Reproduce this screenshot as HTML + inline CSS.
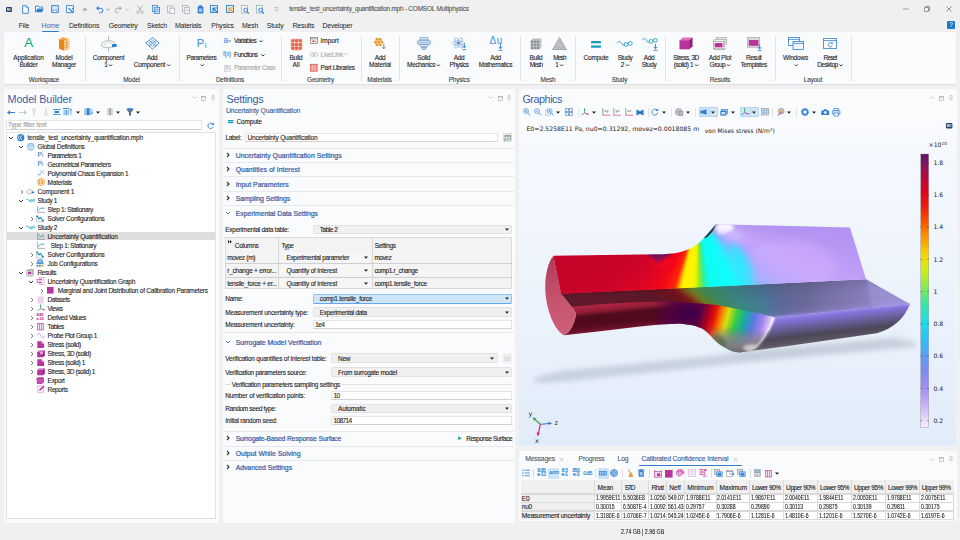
<!DOCTYPE html>
<html lang="en"><head><meta charset="utf-8"><title>COMSOL Multiphysics</title>
<style>

*{box-sizing:border-box;margin:0;padding:0}
html,body{width:960px;height:540px;overflow:hidden;background:#f0f0f0}
body{font-family:"Liberation Sans",sans-serif;font-size:6px;color:#1a1a1a;-webkit-font-smoothing:antialiased}
#app{position:relative;width:960px;height:540px;overflow:hidden;background:#f0f0f0}
.a{position:absolute}
.t{position:absolute;white-space:nowrap;line-height:1.25;-webkit-text-stroke:.1px currentColor}
.panel{position:absolute;background:#fafbfd;border-radius:2px}
.ttl{position:absolute;white-space:nowrap;font-size:10.8px;color:#3b5ea6;line-height:12px;letter-spacing:-.15px}
.sec{position:absolute;white-space:nowrap;font-size:6.9px;color:#345a9c;line-height:9px;-webkit-text-stroke:.22px #3a60a4;color:#3a60a4}
.hl{position:absolute;height:1px;background:#e6e8ee}
.inp{position:absolute;background:#fff;border:1px solid #e6e6e6;border-bottom-color:#d2d2d2;height:9.5px;font-size:6px;line-height:8px;padding-left:2.5px;white-space:nowrap;overflow:hidden}
.sel{position:absolute;background:#f0f0f0;border:1px solid #e2e2e2;border-radius:1.5px;height:9.5px;font-size:6px;line-height:8px;padding-left:7px;white-space:nowrap;overflow:hidden}
svg{position:absolute;overflow:visible}
.rl{position:absolute;white-space:nowrap;font-size:6.5px;letter-spacing:-.1px;line-height:8px;text-align:center;color:#222;transform:translateX(-50%);-webkit-text-stroke:.1px currentColor}
.gl{position:absolute;white-space:nowrap;font-size:6.4px;letter-spacing:-.15px;line-height:8px;text-align:center;color:#3c3c3c;transform:translateX(-50%);top:75.6px;-webkit-text-stroke:.1px currentColor}
.rs{position:absolute;width:1px;top:36px;height:45px;background:#e2e3e6}
.mn{position:absolute;white-space:nowrap;font-size:6.9px;letter-spacing:-.18px;line-height:8px;top:21.5px;color:#222}
.pi{position:absolute;top:94px}

</style></head><body>
<div id="app">
<svg style="left:5.70px;top:6.50px" width="6" height="5" viewBox="0 0 6 5" ><rect x="0" y="0" width="6" height="5" rx="1" fill="#27408b"/><rect x="1" y="1.2" width="2.6" height="2.4" fill="#f2d43a"/><rect x="3.6" y="1.2" width="1.6" height="2.4" fill="#5aa7e8"/></svg><svg style="left:21.50px;top:4.50px" width="7" height="9" viewBox="0 0 7 9" ><path d="M.7.7h3.6l2 2v5.6H.7z" fill="#fff" stroke="#2f7fd0" stroke-width=".9"/><path d="M4.3.7v2h2" fill="none" stroke="#2f7fd0" stroke-width=".7"/></svg><svg style="left:35.20px;top:5.00px" width="9" height="8" viewBox="0 0 9 8" ><path d="M.5 7V1h2.6l.8 1h3.6v1.4" fill="#fff" stroke="#2f7fd0" stroke-width=".9"/><path d="M.6 7.3l1.7-3.9h6.4L7 7.3z" fill="#2f7fd0"/></svg><svg style="left:51.00px;top:4.75px" width="8" height="8.5" viewBox="0 0 8 8.5" ><path d="M.6.6h6.8v7H.6z" fill="#dbe9f7" stroke="#2f7fd0" stroke-width=".9"/><rect x="2" y="5" width="3.8" height="2.6" fill="#fff" stroke="#2f7fd0" stroke-width=".6"/></svg><svg style="left:65.75px;top:4.75px" width="8.5" height="8.5" viewBox="0 0 8.5 8.5" ><path d="M.6.6h6.8v7H.6z" fill="#fff" stroke="#2f7fd0" stroke-width=".9"/><path d="M2.6 3l4.4 4.6M6 3.2l1.3 1.1" stroke="#2f7fd0" stroke-width="1.3"/></svg><svg style="left:83.00px;top:6.50px" width="5" height="5" viewBox="0 0 5 5" ><path d="M.5.2l4 2.3-4 2.3z" fill="#a9adb3"/></svg><svg style="left:95.50px;top:5.50px" width="8" height="7" viewBox="0 0 8 7" ><path d="M1 2.3h3.6a2.2 2.2 0 010 4.4H3.2" fill="none" stroke="#2f7fd0" stroke-width="1"/><path d="M0 2.3L2.6 0v4.6z" fill="#2f7fd0"/></svg><svg style="left:105.50px;top:7.50px" width="4.5" height="3" viewBox="0 0 6 4" ><path d="M1 1l2 2 2-2" fill="none" stroke="#666" stroke-width=".9"/></svg><svg style="left:114.00px;top:5.50px" width="8" height="7" viewBox="0 0 8 7" ><path d="M7 2.3H3.4a2.2 2.2 0 000 4.4h1.4" fill="none" stroke="#a9adb3" stroke-width="1"/><path d="M8 2.3L5.4 0v4.6z" fill="#a9adb3"/></svg><svg style="left:125.30px;top:7.50px" width="4.5" height="3" viewBox="0 0 6 4" ><path d="M1 1l2 2 2-2" fill="none" stroke="#aaa" stroke-width=".9"/></svg><svg style="left:136.30px;top:4.50px" width="8" height="9" viewBox="0 0 8 9" ><path d="M1.5.5l4.3 6M6.5.5l-4.3 6" stroke="#a9adb3" stroke-width=".9"/><circle cx="1.8" cy="7.3" r="1.2" fill="none" stroke="#a9adb3" stroke-width=".8"/><circle cx="6.2" cy="7.3" r="1.2" fill="none" stroke="#a9adb3" stroke-width=".8"/></svg><svg style="left:152.00px;top:4.50px" width="8" height="9" viewBox="0 0 8 9" ><rect x=".5" y=".5" width="5" height="6" fill="#fff" stroke="#2f7fd0" stroke-width=".8"/><rect x="2.3" y="2.3" width="5.2" height="6.2" fill="#e3eefa" stroke="#2f7fd0" stroke-width=".8"/><rect x="3.8" y="4" width="2.2" height="2.8" fill="none" stroke="#2f7fd0" stroke-width=".6"/></svg><svg style="left:166.70px;top:4.50px" width="8" height="9" viewBox="0 0 8 9" ><rect x=".5" y="1" width="5" height="6.5" fill="#f4f4f4" stroke="#a9adb3" stroke-width=".8"/><rect x="3" y="3.2" width="4.5" height="5.3" fill="#fff" stroke="#a9adb3" stroke-width=".8"/></svg><svg style="left:181.50px;top:4.50px" width="8" height="9" viewBox="0 0 8 9" ><rect x=".5" y=".5" width="5" height="6" fill="#fff" stroke="#a9adb3" stroke-width=".8"/><rect x="2.3" y="2.3" width="5.2" height="6.2" fill="#f6f6f6" stroke="#a9adb3" stroke-width=".8"/><path d="M3.5 5.4h2.6M5 4.2l1.2 1.2L5 6.6" fill="none" stroke="#a9adb3" stroke-width=".6"/></svg><svg style="left:196.50px;top:4.50px" width="7" height="9" viewBox="0 0 7 9" ><rect x=".6" y="1.6" width="5.8" height="7" rx="1" fill="#2f7fd0"/><rect x="2" y=".3" width="3" height="1.8" fill="#2f7fd0"/><rect x="1.8" y="3.4" width="3.4" height="3.6" fill="#9cc6ee"/></svg><svg style="left:210.45px;top:4.75px" width="8.5" height="8.5" viewBox="0 0 8.5 8.5" ><rect x=".5" y=".5" width="7" height="7" fill="#e3eefa" stroke="#2f7fd0" stroke-width=".9"/><path d="M3 3l4.8 5M3 3v4M3 3h4" stroke="#2f7fd0" stroke-width="1.1" fill="none"/></svg><svg style="left:225.75px;top:4.75px" width="8.5" height="8.5" viewBox="0 0 8.5 8.5" ><rect x=".5" y=".5" width="7" height="7" fill="#e3eefa" stroke="#2f7fd0" stroke-width=".9"/><path d="M3 3l4.8 5M3 3v4M3 3h4" stroke="#e8a12a" stroke-width="1.1" fill="none"/></svg><svg style="left:240.75px;top:4.50px" width="8.5" height="9" viewBox="0 0 8.5 9" ><rect x=".5" y=".5" width="6" height="7.5" fill="#fff" stroke="#8aa" stroke-width=".7"/><circle cx="4.6" cy="5" r="2" fill="#dbe9f7" stroke="#2f7fd0" stroke-width=".9"/><path d="M6 6.6l2 2" stroke="#2f7fd0" stroke-width="1.1"/></svg><svg style="left:255.75px;top:4.50px" width="8.5" height="9" viewBox="0 0 8.5 9" ><rect x=".5" y=".5" width="6" height="7.5" fill="#fff" stroke="#8aa" stroke-width=".7"/><circle cx="4.6" cy="5" r="2" fill="#dbe9f7" stroke="#2f7fd0" stroke-width=".9"/><path d="M6 6.6l2 2" stroke="#2f7fd0" stroke-width="1.1"/></svg><svg style="left:273.50px;top:6.80px" width="5" height="5" viewBox="0 0 5 5" ><path d="M.8.8h3.4M1 2.6l1.5 1.5L4 2.6" fill="none" stroke="#888" stroke-width=".7"/></svg>
<div class="t" style="left:289.3px;top:4.99px;font-size:6.5px;letter-spacing:-0.247px;color:#555">tensile_test_uncertainty_quantification.mph - COMSOL Multiphysics</div>
<svg style="left:902.50px;top:8.00px" width="6" height="2" viewBox="0 0 6 2" ><path d="M0 1h6" stroke="#666" stroke-width=".6"/></svg>
<svg style="left:924.00px;top:6.00px" width="6" height="6" viewBox="0 0 6 6" ><rect x=".4" y="1.4" width="4.2" height="4.2" rx=".6" fill="none" stroke="#555" stroke-width=".6"/><path d="M1.6 1.4V.9a.5.5 0 01.5-.5H5a.6.6 0 01.6.6v2.9a.5.5 0 01-.5.5h-.5" fill="none" stroke="#555" stroke-width=".6"/></svg>
<svg style="left:946.00px;top:6.00px" width="6" height="6" viewBox="0 0 6 6" ><path d="M.4.4l5.2 5.2M5.6.4L.4 5.6" stroke="#555" stroke-width=".6"/></svg>
<div class="a" style="left:947px;top:20.8px;width:8px;height:8.2px;background:#1f78c8;border-radius:1px;color:#fff;font-size:6.5px;line-height:8.2px;text-align:center">?</div>
<div class="mn" style="left:18.8px;color:#222">File</div><div class="mn" style="left:41.6px;color:#2f6fc0">Home</div><div class="mn" style="left:69px;color:#222">Definitions</div><div class="mn" style="left:108.8px;color:#222">Geometry</div><div class="mn" style="left:147px;color:#222">Sketch</div><div class="mn" style="left:175px;color:#222">Materials</div><div class="mn" style="left:211.3px;color:#222">Physics</div><div class="mn" style="left:242px;color:#222">Mesh</div><div class="mn" style="left:266.8px;color:#222">Study</div><div class="mn" style="left:292.5px;color:#222">Results</div><div class="mn" style="left:322.5px;color:#222">Developer</div><div class="a" style="left:41.8px;top:30.6px;width:17.6px;height:1.2px;background:#2f7fd0;border-radius:1px"></div>
<div class="a" style="left:4.4px;top:32.3px;width:952px;height:51.4px;background:#fafbfd;border-radius:2.5px;box-shadow:0 .5px 1px rgba(0,0,0,.08)"></div>
<div class="rs" style="left:84.7px"></div>
<div class="rs" style="left:179px"></div>
<div class="rs" style="left:281.3px"></div>
<div class="rs" style="left:360.5px"></div>
<div class="rs" style="left:398.8px"></div>
<div class="rs" style="left:520px"></div>
<div class="rs" style="left:575px"></div>
<div class="rs" style="left:665px"></div>
<div class="rs" style="left:775px"></div>
<div class="rs" style="left:851.3px"></div>
<div class="t" style="left:24.2px;top:35.1px;font-size:13.4px;line-height:16px;color:#15a67c">A</div><svg style="left:58.00px;top:36.50px" width="12" height="14" viewBox="0 0 12 14" ><path d="M1 2.2L5.2.3 11.2 2v10.2L6.2 13.7 1 11.6z" fill="#f5a544"/><path d="M1 2.2l5.2 1.6v9.9L1 11.6z" fill="#e8861e"/><path d="M6.2 3.8L11.2 2v10.2l-5 1.5z" fill="#fbe2bd"/><path d="M6.2 6.2l5-1.6M6.2 8.6l5-1.6M6.2 11l5-1.6M8.7 3v10" stroke="#e8861e" stroke-width=".7" fill="none"/></svg><svg style="left:100.50px;top:35.50px" width="16" height="16" viewBox="0 0 16 16" ><path d="M7.5 0v16" stroke="#9aa0a8" stroke-width=".7"/><ellipse cx="7.5" cy="9.2" rx="7" ry="2.6" fill="#f4f5f7" stroke="#9aa0a8" stroke-width=".7"/><path d="M.5 9.2a7 4.6 0 0114 0" fill="#fafafa" stroke="#9aa0a8" stroke-width=".7"/><path d="M3.2 9.6a4.3 3 0 018.6 0" fill="none" stroke="#b5bac0" stroke-width=".6"/><rect x="11" y="8" width="4.6" height="3" rx=".6" fill="#2f7fd0"/></svg><svg style="left:144.50px;top:37.00px" width="15" height="13" viewBox="0 0 15 13" ><path d="M7.5.6l6.6 5.4-6.6 6.2L.9 6z" fill="#fff" stroke="#2f7fd0" stroke-width=".9"/><path d="M7.5 3.2l3.6 3-3.6 3.2-3.6-3.2z M4 3.4l7.2 5.6M11 3.4L3.9 9" fill="none" stroke="#2f7fd0" stroke-width=".7"/></svg><div class="t" style="left:196.8px;top:35.6px;font-size:11.2px;line-height:14px;color:#3f92da">P<span style="font-size:7.5px;position:relative;top:1px;left:.4px">i</span></div><svg style="left:290.50px;top:38.50px" width="11" height="11" viewBox="0 0 11 11" ><rect x="0.3" y="0.3" width="3.3" height="3.3" rx=".8" fill="#e4694e"/><rect x="0.3" y="3.9" width="3.3" height="3.3" rx=".8" fill="#e4694e"/><rect x="0.3" y="7.5" width="3.3" height="3.3" rx=".8" fill="#e4694e"/><rect x="3.9" y="0.3" width="3.3" height="3.3" rx=".8" fill="#e4694e"/><rect x="3.9" y="3.9" width="3.3" height="3.3" rx=".8" fill="#e4694e"/><rect x="3.9" y="7.5" width="3.3" height="3.3" rx=".8" fill="#e4694e"/><rect x="7.5" y="0.3" width="3.3" height="3.3" rx=".8" fill="#e4694e"/><rect x="7.5" y="3.9" width="3.3" height="3.3" rx=".8" fill="#e4694e"/><rect x="7.5" y="7.5" width="3.3" height="3.3" rx=".8" fill="#e4694e"/><rect x=".2" y=".2" width="10.7" height="10.7" rx="2" fill="none" stroke="#e4694e" stroke-width=".5"/></svg><svg style="left:373.50px;top:36.50px" width="13" height="13" viewBox="0 0 13 13" ><circle cx="3" cy="2.2" r="1.55" fill="#f09a2c"/><circle cx="6.2" cy="2.2" r="1.55" fill="#f09a2c"/><circle cx="1.5" cy="5" r="1.55" fill="#f09a2c"/><circle cx="4.7" cy="5" r="1.55" fill="#f09a2c"/><circle cx="7.9" cy="5" r="1.55" fill="#f09a2c"/><circle cx="3" cy="7.8" r="1.55" fill="#f09a2c"/><circle cx="6.2" cy="7.8" r="1.55" fill="#f09a2c"/><path d="M9.8 6.5v5M8.2 9.8l1.6 2 1.6-2" stroke="#777" stroke-width=".8" fill="none"/></svg><svg style="left:416.70px;top:36.50px" width="14" height="13" viewBox="0 0 14 13" ><rect x="3" y=".6" width="8" height="2.2" rx=".5" fill="#eaf1f8" stroke="#5b8fc4" stroke-width=".7"/><rect x=".6" y="3.4" width="12.8" height="3.8" rx=".8" fill="#dbe7f3" stroke="#5b8fc4" stroke-width=".7"/><path d="M2.5 7.6h9l-1.6 2.2H4.1z" fill="#eaf1f8" stroke="#5b8fc4" stroke-width=".7"/><path d="M4.4 10.2h5.2l-1.2 2.2H5.6z" fill="#c9d9ea" stroke="#5b8fc4" stroke-width=".7"/><path d="M1.6 5.3h10.8" stroke="#5b8fc4" stroke-width=".5"/></svg><svg style="left:451.50px;top:35.50px" width="15" height="15" viewBox="0 0 15 15" ><ellipse cx="6.5" cy="7" rx="6" ry="2.3" fill="none" stroke="#7aa7d6" stroke-width=".6" transform="rotate(-55 6.5 7)"/><ellipse cx="6.5" cy="7" rx="6" ry="2.3" fill="none" stroke="#7aa7d6" stroke-width=".6" transform="rotate(55 6.5 7)"/><ellipse cx="6.5" cy="7" rx="6" ry="2.3" fill="none" stroke="#7aa7d6" stroke-width=".6"/><circle cx="6.5" cy="7" r="1.4" fill="#2f7fd0"/><path d="M12.3 7v5M10.7 10l1.6 2 1.6-2M10.5 13.6h3.6" stroke="#2f7fd0" stroke-width=".9" fill="none"/></svg><div class="t" style="left:489.4px;top:34px;font-size:10px;letter-spacing:.8px;line-height:13px;color:#4a98dc">&#916;u</div><svg style="left:497.50px;top:44.00px" width="5" height="7" viewBox="0 0 5 7" ><path d="M2.5 0v4.6M.8 2.8l1.7 2 1.7-2M.5 6.3h4" stroke="#2f7fd0" stroke-width=".9" fill="none"/></svg><svg style="left:530.00px;top:37.50px" width="12" height="12" viewBox="0 0 12 12" ><path d="M.8 2.8L3 .6h8.4v8.2L9.2 11.2H.8z" fill="#b9bcc2"/><rect x=".8" y="2.8" width="8.4" height="8.4" fill="#8d9097"/><path d="M.8 5.6h8.4M.8 8.4h8.4M3.6 2.8v8.4M6.4 2.8v8.4M9.2 2.8L11.4.6M9.2 5.6l2.2-2.2M9.2 8.4l2.2-2.2" stroke="#e4e5e8" stroke-width=".5"/></svg><svg style="left:552.00px;top:37.00px" width="15" height="13" viewBox="0 0 15 13" ><path d="M7.5.5l7 12H.5z" fill="#c8cacf" stroke="#8d9097" stroke-width=".7"/><path d="M7.5 3.5l-1.7 3h3.4zM4 9.6l1.8-3.1M11 9.6L9.2 6.5M4 9.6h7M2.2 12.4L4 9.6l1.8 2.8M11 9.6l-1.8 2.8L7.5 9.6 5.8 12.4M11 9.6l1.8 2.8" fill="none" stroke="#8d9097" stroke-width=".4"/></svg><svg style="left:591.00px;top:40.50px" width="10" height="7" viewBox="0 0 10 7" ><rect x="0" y="0" width="10" height="2.3" rx=".4" fill="#1a9cc0"/><rect x="0" y="4.4" width="10" height="2.3" rx=".4" fill="#1a9cc0"/></svg><svg style="left:617.00px;top:39.50px" width="16" height="8" viewBox="0 0 16 8" ><path d="M.5 3.2c1.2-2.4 2.6-2.4 3.8 0s2.2 2.2 3 .9" fill="none" stroke="#1a9cc0" stroke-width=".9"/><circle cx="9" cy="4.4" r="1.9" fill="none" stroke="#1a9cc0" stroke-width=".9"/><circle cx="13.3" cy="3.4" r="1.9" fill="none" stroke="#1a9cc0" stroke-width=".9"/></svg><svg style="left:641.50px;top:36.50px" width="16" height="8" viewBox="0 0 16 8" ><path d="M.5 3.2c1.2-2.4 2.6-2.4 3.8 0s2.2 2.2 3 .9" fill="none" stroke="#1a9cc0" stroke-width=".9"/><circle cx="9" cy="4.4" r="1.9" fill="none" stroke="#1a9cc0" stroke-width=".9"/><circle cx="13.3" cy="3.4" r="1.9" fill="none" stroke="#1a9cc0" stroke-width=".9"/></svg><svg style="left:652.50px;top:44.00px" width="5" height="7" viewBox="0 0 5 7" ><path d="M2.5 0v4.6M.8 2.8l1.7 2 1.7-2M.5 6.3h4" stroke="#2f7fd0" stroke-width=".9" fill="none"/></svg><svg style="left:679.00px;top:37.00px" width="14" height="13" viewBox="0 0 14 13" ><path d="M.6 3.4L3.6.6h9.8v8.6l-3 3H.6z" fill="#d873c0"/><rect x=".6" y="3.4" width="9.8" height="8.8" fill="#b9359c"/><path d="M10.4 3.4l3-2.8v8.6l-3 3z" fill="#8e1f76"/></svg><svg style="left:713.00px;top:36.50px" width="15" height="14" viewBox="0 0 15 14" ><rect x="3.4" y=".6" width="10" height="7" fill="#e9e9ec" stroke="#999" stroke-width=".6"/><rect x="1.8" y="2.4" width="10" height="7" fill="#f3f3f5" stroke="#999" stroke-width=".6"/><rect x=".4" y="4.4" width="10.4" height="7.4" fill="#fff" stroke="#888" stroke-width=".6"/><rect x="1.6" y="6" width="8" height="4.4" fill="#b9359c"/><path d="M.4 12.6h11.4l1.4-2" stroke="#888" stroke-width=".6" fill="none"/></svg><svg style="left:746.50px;top:36.50px" width="15" height="14" viewBox="0 0 15 14" ><rect x=".4" y=".6" width="12.4" height="9.6" fill="#d9d9de" stroke="#9a9aa0" stroke-width=".6"/><rect x="1.8" y="3" width="9.6" height="5.8" fill="#b9359c"/><path d="M12.6 7.5v4.6M11 10.2l1.6 2 1.6-2M10.8 13.6h3.6" stroke="#2f7fd0" stroke-width=".9" fill="none"/></svg><svg style="left:787.50px;top:37.00px" width="16" height="13" viewBox="0 0 16 13" ><rect x=".5" y=".5" width="11" height="8" fill="#fff" stroke="#2f7fd0" stroke-width=".8"/><path d="M.5 2.4h11" stroke="#2f7fd0" stroke-width=".8"/><rect x="5" y="4.4" width="10.4" height="8" fill="#f2f7fc" stroke="#2f7fd0" stroke-width=".8"/><path d="M5 6.4h10.4" stroke="#2f7fd0" stroke-width=".8"/></svg><svg style="left:823.00px;top:38.00px" width="14" height="11" viewBox="0 0 14 11" ><rect x=".5" y=".5" width="13" height="10" fill="#fff" stroke="#2f7fd0" stroke-width=".8"/><path d="M.5 2.6h13" stroke="#2f7fd0" stroke-width=".8"/><path d="M9 5.2a2.2 2.2 0 10.4 2.6" fill="none" stroke="#2f7fd0" stroke-width=".8"/><path d="M9.8 3.8v2h-2z" fill="#2f7fd0"/></svg>
<div class="t" style="left:223.6px;top:36.3px;font-size:8.2px;line-height:10px;color:#3f92da">a<span style="font-size:4.4px;position:relative;top:-1.4px;left:.2px;font-weight:bold">=</span></div><div class="t" style="left:234px;top:37.19px;font-size:6.5px;letter-spacing:-0.469px;">Variables</div><div class="t" style="left:223px;top:50.4px;font-size:6.3px;letter-spacing:-.35px;color:#3f92da">f(x)</div><div class="t" style="left:234px;top:50.69px;font-size:6.5px;letter-spacing:-0.509px;">Functions</div><svg style="left:224.00px;top:64.50px" width="7" height="7" viewBox="0 0 7 7" ><rect x=".4" y=".4" width="6.2" height="6.2" fill="#f4f4f4" stroke="#c2c2c2" stroke-width=".6"/></svg><div class="t" style="left:225.4px;top:64.6px;font-size:5px;line-height:7px;color:#b8b8b8">P<span style="font-size:3.6px">i</span></div><div class="t" style="left:234px;top:64.19px;font-size:6.5px;letter-spacing:-0.423px;color:#a8a8a8">Parameter Case</div><svg style="left:309.70px;top:37.00px" width="8" height="7" viewBox="0 0 8 7" ><rect x=".4" y=".4" width="7.2" height="6.2" fill="#fff" stroke="#777" stroke-width=".7"/><path d="M.4 1.8h7.2" stroke="#777" stroke-width=".7"/><path d="M6.4 4.2H2.6M4 2.8L2.4 4.2 4 5.6" stroke="#e0553b" stroke-width=".9" fill="none"/></svg><div class="t" style="left:320.6px;top:37.19px;font-size:6.5px;letter-spacing:-0.054px;">Import</div><svg style="left:309.70px;top:51.50px" width="8" height="5" viewBox="0 0 8 5" ><rect x=".4" y=".8" width="4" height="3.4" rx="1.4" fill="none" stroke="#b5b5b5" stroke-width=".8"/><rect x="3.6" y=".8" width="4" height="3.4" rx="1.4" fill="none" stroke="#b5b5b5" stroke-width=".8"/></svg><div class="t" style="left:320.6px;top:50.69px;font-size:6.5px;letter-spacing:-0.181px;color:#a8a8a8">LiveLink</div><svg style="left:310.00px;top:64.10px" width="7.4" height="7.4" viewBox="0 0 7.4 7.4" ><rect x="0" y="0" width="7.4" height="7.4" fill="#e88a80"/><path d="M0 2.5h7.4M0 4.9h7.4M2.5 0v7.4M4.9 0v7.4" stroke="#f7c8c2" stroke-width=".6"/><rect x=".2" y=".2" width="7" height="7" fill="none" stroke="#d9574a" stroke-width=".5"/></svg><div class="t" style="left:320.6px;top:64.19px;font-size:6.5px;letter-spacing:-0.333px;">Part Libraries</div>
<div class="rl" style="left:28.5px;top:53.6px"><span style="letter-spacing:-0.118px">Application</span></div><div class="rl" style="left:28.5px;top:60.99999999999999px"><span style="letter-spacing:-0.319px">Builder</span></div>
<div class="rl" style="left:64px;top:53.6px"><span style="letter-spacing:-0.141px">Model</span></div><div class="rl" style="left:64px;top:60.99999999999999px"><span style="letter-spacing:-0.265px">Manager</span></div>
<div class="rl" style="left:108.5px;top:53.6px"><span style="letter-spacing:-0.245px">Component</span></div><div class="rl" style="left:108.5px;top:60.99999999999999px"><span style="letter-spacing:-0.1px">1</span><svg style="position:relative;display:inline-block;vertical-align:.2px;margin-left:1.4px" width="3.8" height="2.8" viewBox="0 0 3.8 2.8"><path d="M.4.5l1.500 1.500L3.400.5" fill="none" stroke="#2a2a2a" stroke-width="1"/></svg></div>
<div class="rl" style="left:152px;top:53.6px"><span style="letter-spacing:-0.289px">Add</span></div><div class="rl" style="left:152px;top:60.99999999999999px"><span style="letter-spacing:-0.245px">Component</span><svg style="position:relative;display:inline-block;vertical-align:.2px;margin-left:1.4px" width="3.8" height="2.8" viewBox="0 0 3.8 2.8"><path d="M.4.5l1.500 1.500L3.400.5" fill="none" stroke="#2a2a2a" stroke-width="1"/></svg></div>
<div class="rl" style="left:201.5px;top:53.6px"><span style="letter-spacing:-0.36px">Parameters</span></div><div class="rl" style="left:201.5px;top:60.99999999999999px"><svg style="position:relative;display:inline-block;vertical-align:.2px;margin-left:1.4px" width="3.8" height="2.8" viewBox="0 0 3.8 2.8"><path d="M.4.5l1.500 1.500L3.400.5" fill="none" stroke="#2a2a2a" stroke-width="1"/></svg></div>
<div class="rl" style="left:296px;top:53.6px"><span style="letter-spacing:-0.331px">Build</span></div><div class="rl" style="left:296px;top:60.99999999999999px"><span style="letter-spacing:-0.075px">All</span></div>
<div class="rl" style="left:380px;top:53.6px"><span style="letter-spacing:-0.289px">Add</span></div><div class="rl" style="left:380px;top:60.99999999999999px"><span style="letter-spacing:-0.165px">Material</span></div>
<div class="rl" style="left:423.7px;top:53.6px"><span style="letter-spacing:-0.291px">Solid</span></div><div class="rl" style="left:423.7px;top:60.99999999999999px"><span style="letter-spacing:-0.341px">Mechanics</span><svg style="position:relative;display:inline-block;vertical-align:.2px;margin-left:1.4px" width="3.8" height="2.8" viewBox="0 0 3.8 2.8"><path d="M.4.5l1.500 1.500L3.400.5" fill="none" stroke="#2a2a2a" stroke-width="1"/></svg></div>
<div class="rl" style="left:459px;top:53.6px"><span style="letter-spacing:-0.289px">Add</span></div><div class="rl" style="left:459px;top:60.99999999999999px"><span style="letter-spacing:-0.514px">Physics</span></div>
<div class="rl" style="left:495.5px;top:53.6px"><span style="letter-spacing:-0.289px">Add</span></div><div class="rl" style="left:495.5px;top:60.99999999999999px"><span style="letter-spacing:-0.313px">Mathematics</span></div>
<div class="rl" style="left:536px;top:53.6px"><span style="letter-spacing:-0.331px">Build</span></div><div class="rl" style="left:536px;top:60.99999999999999px"><span style="letter-spacing:-0.824px">Mesh</span></div>
<div class="rl" style="left:559.5px;top:53.6px"><span style="letter-spacing:-0.824px">Mesh</span></div><div class="rl" style="left:559.5px;top:60.99999999999999px"><span style="letter-spacing:-0.1px">1</span><svg style="position:relative;display:inline-block;vertical-align:.2px;margin-left:1.4px" width="3.8" height="2.8" viewBox="0 0 3.8 2.8"><path d="M.4.5l1.500 1.500L3.400.5" fill="none" stroke="#2a2a2a" stroke-width="1"/></svg></div>
<div class="rl" style="left:596px;top:53.6px"><span style="letter-spacing:-0.196px">Compute</span></div>
<div class="rl" style="left:625px;top:53.6px"><span style="letter-spacing:-0.384px">Study</span></div><div class="rl" style="left:625px;top:60.99999999999999px"><span style="letter-spacing:-0.1px">2</span><svg style="position:relative;display:inline-block;vertical-align:.2px;margin-left:1.4px" width="3.8" height="2.8" viewBox="0 0 3.8 2.8"><path d="M.4.5l1.500 1.500L3.400.5" fill="none" stroke="#2a2a2a" stroke-width="1"/></svg></div>
<div class="rl" style="left:649px;top:53.6px"><span style="letter-spacing:-0.289px">Add</span></div><div class="rl" style="left:649px;top:60.99999999999999px"><span style="letter-spacing:-0.384px">Study</span></div>
<div class="rl" style="left:686px;top:53.6px"><span style="letter-spacing:-0.484px">Stress, 3D</span></div><div class="rl" style="left:686px;top:60.99999999999999px"><span style="letter-spacing:-0.402px">(solid) 1</span><svg style="position:relative;display:inline-block;vertical-align:.2px;margin-left:1.4px" width="3.8" height="2.8" viewBox="0 0 3.8 2.8"><path d="M.4.5l1.500 1.500L3.400.5" fill="none" stroke="#2a2a2a" stroke-width="1"/></svg></div>
<div class="rl" style="left:720px;top:53.6px"><span style="letter-spacing:-0.247px">Add Plot</span></div><div class="rl" style="left:720px;top:60.99999999999999px"><span style="letter-spacing:-0.493px">Group</span><svg style="position:relative;display:inline-block;vertical-align:.2px;margin-left:1.4px" width="3.8" height="2.8" viewBox="0 0 3.8 2.8"><path d="M.4.5l1.500 1.500L3.400.5" fill="none" stroke="#2a2a2a" stroke-width="1"/></svg></div>
<div class="rl" style="left:753.7px;top:53.6px"><span style="letter-spacing:-0.487px">Result</span></div><div class="rl" style="left:753.7px;top:60.99999999999999px"><span style="letter-spacing:-0.347px">Templates</span></div>
<div class="rl" style="left:795.5px;top:53.6px"><span style="letter-spacing:-0.196px">Windows</span></div><div class="rl" style="left:795.5px;top:60.99999999999999px"><svg style="position:relative;display:inline-block;vertical-align:.2px;margin-left:1.4px" width="3.8" height="2.8" viewBox="0 0 3.8 2.8"><path d="M.4.5l1.500 1.500L3.400.5" fill="none" stroke="#2a2a2a" stroke-width="1"/></svg></div>
<div class="rl" style="left:830px;top:53.6px"><span style="letter-spacing:-0.796px">Reset</span></div><div class="rl" style="left:830px;top:60.99999999999999px"><span style="letter-spacing:-0.478px">Desktop</span><svg style="position:relative;display:inline-block;vertical-align:.2px;margin-left:1.4px" width="3.8" height="2.8" viewBox="0 0 3.8 2.8"><path d="M.4.5l1.500 1.500L3.400.5" fill="none" stroke="#2a2a2a" stroke-width="1"/></svg></div>
<svg style="left:258.50px;top:40.20px" width="3.8" height="2.8" viewBox="0 0 3.8 2.8" ><path d="M.4.5l1.5 1.5L3.4.5" fill="none" stroke="#2a2a2a" stroke-width="1"/></svg>
<svg style="left:260.50px;top:53.70px" width="3.8" height="2.8" viewBox="0 0 3.8 2.8" ><path d="M.4.5l1.5 1.5L3.4.5" fill="none" stroke="#2a2a2a" stroke-width="1"/></svg>
<svg style="left:344.20px;top:53.40px" width="3.6" height="2.6" viewBox="0 0 3.6 2.6" ><path d="M.4.5l1.4 1.4L3.2.5" fill="none" stroke="#aaa" stroke-width=".7"/></svg>
<div class="gl" style="left:44px">Workspace</div>
<div class="gl" style="left:131.5px">Model</div>
<div class="gl" style="left:230px">Definitions</div>
<div class="gl" style="left:320.5px">Geometry</div>
<div class="gl" style="left:379.5px">Materials</div>
<div class="gl" style="left:459.2px">Physics</div>
<div class="gl" style="left:548px">Mesh</div>
<div class="gl" style="left:619.5px">Study</div>
<div class="gl" style="left:720px">Results</div>
<div class="gl" style="left:813px">Layout</div>
<div class="panel" style="left:4.3px;top:89.2px;width:214.3px;height:434px"></div>
<div class="ttl" style="left:7.6px;top:-6.67px;font-size:10.8px;letter-spacing:-0.126px;top:93.4px">Model Builder</div>
<svg style="left:191.90px;top:96.30px" width="5" height="3.4" viewBox="0 0 5 3.4" ><path d="M.5.5l2 2 2-2" fill="none" stroke="#b4b4b4" stroke-width=".7"/></svg><svg style="left:201.30px;top:95.50px" width="5" height="5" viewBox="0 0 5 5" ><rect x=".4" y=".4" width="4.2" height="4.2" fill="none" stroke="#a8a8a8" stroke-width=".6"/><path d="M.4 1h4.2" stroke="#a8a8a8" stroke-width=".9"/></svg><svg style="left:210.60px;top:94.70px" width="4" height="6" viewBox="0 0 4 6" ><path d="M1 .4h2v2.6l.6.8H.4l.6-.8zM2 3.8v2" fill="none" stroke="#b4b4b4" stroke-width=".6"/></svg>
<svg style="left:7.00px;top:109.50px" width="8" height="5" viewBox="0 0 8 5" ><path d="M2.6 2.5H8" stroke="#2f7fd0" stroke-width="1"/><path d="M0 2.5L3 .2v4.6z" fill="#2f7fd0"/></svg><svg style="left:18.50px;top:109.50px" width="8" height="5" viewBox="0 0 8 5" ><path d="M0 2.5h5.4" stroke="#c4c4c4" stroke-width=".8"/><path d="M8 2.5L5 .2v4.6z" fill="#c4c4c4"/></svg><svg style="left:32.00px;top:108.00px" width="4" height="8" viewBox="0 0 4 8" ><path d="M2 2.4V8" stroke="#bdbdbd" stroke-width=".7"/><path d="M.4 2.8L2 .3l1.6 2.5" fill="none" stroke="#bdbdbd" stroke-width=".7"/></svg><svg style="left:43.50px;top:108.00px" width="4" height="8" viewBox="0 0 4 8" ><path d="M2 0v5.6" stroke="#bdbdbd" stroke-width=".7"/><path d="M.4 5.2L2 7.7l1.6-2.5" fill="none" stroke="#bdbdbd" stroke-width=".7"/></svg><svg style="left:53.20px;top:109.00px" width="7.6" height="6" viewBox="0 0 7.6 6" ><path d="M0 .6h7.6M0 5.4h7.6" stroke="#2f7fd0" stroke-width=".9"/><rect x="1.6" y="2" width="4.4" height="2" fill="#2f7fd0"/></svg><svg style="left:63.00px;top:108.30px" width="9" height="7.4" viewBox="0 0 9 7.4" ><path d="M0 .5h6.4" stroke="#2f7fd0" stroke-width=".9"/><rect x=".4" y="1.8" width="1.8" height="5.4" fill="#9cc6ee"/><rect x="2.6" y="1.8" width="1.8" height="5.4" fill="#5aa0e0"/><rect x="4.8" y="1.8" width="1.2" height="5.4" fill="#9cc6ee"/><path d="M7.8 7V1.4M6.8 2.6l1-1.6 1 1.6" stroke="#2f7fd0" stroke-width=".7" fill="none"/></svg><svg style="left:75.50px;top:110.50px" width="4" height="3" viewBox="0 0 4 3" ><path d="M0 .4h4L2 2.8z" fill="#222"/></svg><svg style="left:83.50px;top:108.30px" width="9" height="7.4" viewBox="0 0 9 7.4" ><rect x=".2" y=".2" width="2" height="7" fill="#9cc6ee"/><rect x="2.6" y=".2" width="3" height="7" fill="#2f7fd0"/><rect x="6" y=".2" width="1" height="7" fill="#9cc6ee"/><path d="M8 1v4.6M7.2 4.6l.8 1.6.8-1.6" stroke="#2f7fd0" stroke-width=".6" fill="none"/></svg><svg style="left:96.00px;top:110.50px" width="4" height="3" viewBox="0 0 4 3" ><path d="M0 .4h4L2 2.8z" fill="#222"/></svg><svg style="left:106.50px;top:108.30px" width="6" height="7.4" viewBox="0 0 6 7.4" ><rect x=".2" y=".2" width="1.8" height="7" fill="#cfcfcf"/><rect x="2.3" y=".2" width="1.6" height="7" fill="#9a9a9a"/><rect x="4.2" y=".2" width="1.6" height="7" fill="#cfcfcf"/></svg><svg style="left:116.00px;top:110.50px" width="4" height="3" viewBox="0 0 4 3" ><path d="M0 .4h4L2 2.8z" fill="#222"/></svg><svg style="left:126.00px;top:108.00px" width="8" height="8" viewBox="0 0 8 8" ><path d="M.2 1.2h7.6L5 4.4H3z" fill="#5b6f8a"/><rect x="3" y="4" width="2" height="3.6" fill="#5b6f8a"/><rect x="1.2" y=".2" width="5.6" height="1.6" fill="#2f7fd0"/></svg><svg style="left:136.30px;top:110.50px" width="4" height="3" viewBox="0 0 4 3" ><path d="M0 .4h4L2 2.8z" fill="#222"/></svg>
<div class="inp" style="left:6.3px;top:120.4px;width:195.8px;height:9.2px"></div>
<div class="t" style="left:8px;top:120.99px;font-size:6.5px;letter-spacing:-0.123px;color:#9a9a9a">Type filter text</div>
<svg style="left:207.30px;top:121.50px" width="7" height="7" viewBox="0 0 7 7" ><path d="M5.8 2.2A2.7 2.7 0 106.2 4.6" fill="none" stroke="#2f7fd0" stroke-width=".9"/><path d="M6.9.4v2.6H4.3z" fill="#2f7fd0"/></svg>
<div class="a" style="left:6.3px;top:132.2px;width:209.9px;height:387.2px;background:#fff;border:1px solid #e1e1e1"></div>
<svg style="left:8.20px;top:135.60px" width="6" height="4" viewBox="0 0 6 4" ><path d="M1 1l2 2 2-2" fill="none" stroke="#222" stroke-width=".9"/></svg>
<svg style="left:17.30px;top:133.70px" width="7.4" height="7.4" viewBox="0 0 7.4 7.4" ><circle cx="3.7" cy="3.7" r="3.6" fill="#2f7fd0"/><path d="M2.6 1.6a2.6 2.6 0 000 4.2M4.9 1.4L3.3 3.7l1.6 2.3" stroke="#fff" stroke-width=".8" fill="none"/></svg>
<div class="t" style="left:27.5px;top:134.19px;font-size:6.5px;letter-spacing:-0.218px;">tensile_test_uncertainty_quantification.mph</div>
<svg style="left:18.20px;top:144.60px" width="6" height="4" viewBox="0 0 6 4" ><path d="M1 1l2 2 2-2" fill="none" stroke="#222" stroke-width=".9"/></svg>
<svg style="left:26.70px;top:142.60px" width="7.6" height="7.6" viewBox="0 0 7.6 7.6" ><circle cx="3.8" cy="3.8" r="3.5" fill="#b7d8f4" stroke="#5d9fdb" stroke-width=".6"/><path d="M.6 4.8c2 .9 4.4.9 6.4 0" stroke="#e9f3fc" stroke-width=".8" fill="none"/></svg>
<div class="t" style="left:37.6px;top:143.19px;font-size:6.5px;letter-spacing:-0.219px;">Global Definitions</div>
<div class="t" style="left:37.5px;top:151.20000000000002px;font-size:6.8px;color:#2f7fd0">P<span style="font-size:4.6px">i</span></div>
<div class="t" style="left:47.6px;top:152.19px;font-size:6.5px;letter-spacing:-0.435px;">Parameters 1</div>
<div class="t" style="left:37.5px;top:160.20000000000002px;font-size:6.8px;color:#2f7fd0">P<span style="font-size:4.6px">i</span></div>
<div class="t" style="left:47.6px;top:161.19px;font-size:6.5px;letter-spacing:-0.338px;">Geometrical Parameters</div>
<svg style="left:36.50px;top:169.40px" width="8" height="8" viewBox="0 0 8 8" ><path d="M.6 7.2c1.6-.4 2.6-1.6 3.4-3.2S6 1.4 7.4.8" stroke="#8cbfe8" stroke-width=".7" fill="none"/><g fill="#6aa9de"><circle cx="1.6" cy="5.4" r=".6"/><circle cx="3" cy="5.8" r=".5"/><circle cx="4.6" cy="3" r=".6"/><circle cx="5.8" cy="2.8" r=".5"/><circle cx="6.6" cy="4.6" r=".5"/><circle cx="3.4" cy="2" r=".5"/></g></svg>
<div class="t" style="left:47.6px;top:170.19px;font-size:6.5px;letter-spacing:-0.328px;">Polynomial Chaos Expansion 1</div>
<svg style="left:36.50px;top:178.40px" width="8" height="8" viewBox="0 0 8 8" ><circle cx="4" cy="4" r="3.6" fill="#fbe3c2" stroke="#f09a2c" stroke-width=".7"/><g fill="#f09a2c"><circle cx="2.6" cy="3" r=".9"/><circle cx="5.2" cy="3" r=".9"/><circle cx="2.6" cy="5.2" r=".9"/><circle cx="5.2" cy="5.2" r=".9"/></g></svg>
<div class="t" style="left:47.6px;top:179.19px;font-size:6.5px;letter-spacing:-0.23px;">Materials</div>
<svg style="left:19.50px;top:188.60px" width="4" height="6" viewBox="0 0 4 6" ><path d="M1 1l2 2-2 2" fill="none" stroke="#555" stroke-width="0.75"/></svg>
<svg style="left:26.25px;top:187.90px" width="8.5" height="7" viewBox="0 0 8.5 7" ><path d="M3.8 0v7" stroke="#9aa0a8" stroke-width=".5"/><ellipse cx="3.8" cy="4.2" rx="3.5" ry="1.4" fill="#eee" stroke="#9aa0a8" stroke-width=".5"/><path d="M.3 4.2a3.5 2.4 0 017 0" fill="#f6f6f6" stroke="#9aa0a8" stroke-width=".5"/><rect x="5.6" y="3.6" width="2.6" height="1.6" fill="#2f7fd0"/></svg>
<div class="t" style="left:37.6px;top:188.19px;font-size:6.5px;letter-spacing:-0.23px;">Component 1</div>
<svg style="left:18.20px;top:198.60px" width="6" height="4" viewBox="0 0 6 4" ><path d="M1 1l2 2 2-2" fill="none" stroke="#222" stroke-width=".9"/></svg>
<svg style="left:26.00px;top:197.90px" width="9" height="5" viewBox="0 0 9 5" ><path d="M.3 2c.7-1.5 1.5-1.5 2.2 0s1.3 1.3 1.7.5" fill="none" stroke="#1a9cc0" stroke-width=".7"/><circle cx="5.2" cy="2.8" r="1.1" fill="none" stroke="#1a9cc0" stroke-width=".7"/><circle cx="7.7" cy="2.2" r="1.1" fill="none" stroke="#1a9cc0" stroke-width=".7"/></svg>
<div class="t" style="left:37.6px;top:197.19px;font-size:6.5px;letter-spacing:-0.363px;">Study 1</div>
<svg style="left:36.50px;top:205.90px" width="8" height="7" viewBox="0 0 8 7" ><path d="M.6 0v6.4H8" stroke="#777" stroke-width=".6" fill="none"/><path d="M1.4 4.6l2.2-2.4h4" stroke="#1a9cc0" stroke-width=".8" fill="none"/></svg>
<div class="t" style="left:47.6px;top:206.19px;font-size:6.5px;letter-spacing:-0.354px;">Step 1: Stationary</div>
<svg style="left:29.50px;top:215.60px" width="4" height="6" viewBox="0 0 4 6" ><path d="M1 1l2 2-2 2" fill="none" stroke="#555" stroke-width="0.75"/></svg>
<svg style="left:36.30px;top:214.70px" width="8.4" height="7.4" viewBox="0 0 8.4 7.4" ><path d="M.6 0v6.8H8.2" stroke="#999" stroke-width=".5" fill="none"/><path d="M1 1.2l2 2.4 1.6-1 2 3 1.4.4" stroke="#1a9cc0" stroke-width="1.1" fill="none"/><g fill="#0f7fa8"><circle cx="1.2" cy="1.3" r=".8"/><circle cx="3" cy="3.6" r=".8"/><circle cx="6.6" cy="5.6" r=".8"/></g></svg>
<div class="t" style="left:47.6px;top:215.19px;font-size:6.5px;letter-spacing:-0.245px;">Solver Configurations</div>
<svg style="left:18.20px;top:225.60px" width="6" height="4" viewBox="0 0 6 4" ><path d="M1 1l2 2 2-2" fill="none" stroke="#222" stroke-width=".9"/></svg>
<svg style="left:26.00px;top:224.90px" width="9" height="5" viewBox="0 0 9 5" ><path d="M.3 2c.7-1.5 1.5-1.5 2.2 0s1.3 1.3 1.7.5" fill="none" stroke="#1a9cc0" stroke-width=".7"/><circle cx="5.2" cy="2.8" r="1.1" fill="none" stroke="#1a9cc0" stroke-width=".7"/><circle cx="7.7" cy="2.2" r="1.1" fill="none" stroke="#1a9cc0" stroke-width=".7"/></svg>
<div class="t" style="left:37.6px;top:224.19px;font-size:6.5px;letter-spacing:-0.363px;">Study 2</div>
<div class="a" style="left:7.3px;top:231.6px;width:207.9px;height:8.8px;background:#dedede"></div>
<svg style="left:36.50px;top:232.90px" width="8" height="7" viewBox="0 0 8 7" ><path d="M.6 0v6.4H8" stroke="#777" stroke-width=".6" fill="none"/><path d="M1.6 1.2l2.2 3.2 1.6-2.8 1.8 3.4" stroke="#1a9cc0" stroke-width=".7" fill="none"/><path d="M1.4 5l5.8-3.6" stroke="#8a8" stroke-width=".5"/></svg>
<div class="t" style="left:47.6px;top:233.19px;font-size:6.5px;letter-spacing:-0.17px;">Uncertainty Quantification</div>
<svg style="left:36.50px;top:241.90px" width="8" height="7" viewBox="0 0 8 7" ><path d="M.6 0v6.4H8" stroke="#777" stroke-width=".6" fill="none"/><path d="M1.4 4.6l2.2-2.4h4" stroke="#1a9cc0" stroke-width=".8" fill="none"/></svg>
<div class="t" style="left:50.8px;top:242.19px;font-size:6.5px;letter-spacing:-0.354px;">Step 1: Stationary</div>
<svg style="left:29.50px;top:251.60px" width="4" height="6" viewBox="0 0 4 6" ><path d="M1 1l2 2-2 2" fill="none" stroke="#555" stroke-width="0.75"/></svg>
<svg style="left:36.30px;top:250.70px" width="8.4" height="7.4" viewBox="0 0 8.4 7.4" ><path d="M.6 0v6.8H8.2" stroke="#999" stroke-width=".5" fill="none"/><path d="M1 1.2l2 2.4 1.6-1 2 3 1.4.4" stroke="#1a9cc0" stroke-width="1.1" fill="none"/><g fill="#0f7fa8"><circle cx="1.2" cy="1.3" r=".8"/><circle cx="3" cy="3.6" r=".8"/><circle cx="6.6" cy="5.6" r=".8"/></g></svg>
<div class="t" style="left:47.6px;top:251.19px;font-size:6.5px;letter-spacing:-0.245px;">Solver Configurations</div>
<svg style="left:29.50px;top:260.60px" width="4" height="6" viewBox="0 0 4 6" ><path d="M1 1l2 2-2 2" fill="none" stroke="#555" stroke-width="0.75"/></svg>
<svg style="left:36.30px;top:259.40px" width="8.4" height="8" viewBox="0 0 8.4 8" ><path d="M1.800.3h4.600l.8 3.600H.8z" fill="#4a94dc"/><rect x="2.400" y="1" width="3.400" height="2.200" fill="#9cc6ee"/><path d="M.4 4.700h7.200" stroke="#2f7fd0" stroke-width="1"/><path d="M6.800 3.200c1.400.6 1.400 2.600.2 3.400" stroke="#c8c8c8" stroke-width=".6" fill="none"/><rect x=".6" y="6" width="1.700" height="1.700" fill="#2f7fd0"/><rect x="3" y="6" width="1.700" height="1.700" fill="#3aa84a"/><rect x="5.400" y="6" width="1.700" height="1.700" fill="#f09a2c"/></svg>
<div class="t" style="left:47.6px;top:260.19px;font-size:6.5px;letter-spacing:-0.233px;">Job Configurations</div>
<svg style="left:18.20px;top:270.60px" width="6" height="4" viewBox="0 0 6 4" ><path d="M1 1l2 2 2-2" fill="none" stroke="#222" stroke-width=".9"/></svg>
<svg style="left:26.30px;top:268.60px" width="8.4" height="7.6" viewBox="0 0 8.4 7.6" ><rect x="2" y=".3" width="5.4" height="4.6" fill="#ddd" stroke="#888" stroke-width=".5"/><rect x=".8" y="1.4" width="5.6" height="4.6" fill="#f4f4f4" stroke="#888" stroke-width=".5"/><rect x="1.8" y="2.6" width="3.6" height="2.4" fill="#b9359c"/><path d="M.3 7h6.4l1.4-1.6" stroke="#888" stroke-width=".6" fill="none"/></svg>
<div class="t" style="left:37.6px;top:269.19px;font-size:6.5px;letter-spacing:-0.453px;">Results</div>
<svg style="left:28.20px;top:279.60px" width="6" height="4" viewBox="0 0 6 4" ><path d="M1 1l2 2 2-2" fill="none" stroke="#222" stroke-width=".9"/></svg>
<svg style="left:36.30px;top:277.40px" width="8.4" height="8" viewBox="0 0 8.4 8" ><rect x="3.2" y=".4" width="4.8" height="7.2" fill="#fdf4fb" stroke="#dc8acb" stroke-width=".6"/><path d="M.4 2.500h4.200M.4 5.500h4.200M1.600 2.500v3" stroke="#b9359c" stroke-width=".6" fill="none"/><rect x="4.200" y="1.800" width="1.500" height="1.500" fill="#b9359c"/><rect x="4.200" y="4.800" width="1.500" height="1.500" fill="#b9359c"/></svg>
<div class="t" style="left:47.6px;top:278.19px;font-size:6.5px;letter-spacing:-0.212px;">Uncertainty Quantification Graph</div>
<svg style="left:39.50px;top:287.60px" width="4" height="6" viewBox="0 0 4 6" ><path d="M1 1l2 2-2 2" fill="none" stroke="#555" stroke-width="0.75"/></svg>
<svg style="left:47.20px;top:287.10px" width="6.6" height="6.6" viewBox="0 0 6.6 6.6" ><rect width="6.6" height="6.6" fill="#b9359c"/></svg>
<div class="t" style="left:57.8px;top:287.19px;font-size:6.5px;letter-spacing:-0.227px;">Marginal and Joint Distribution of Calibration Parameters</div>
<svg style="left:29.50px;top:296.60px" width="4" height="6" viewBox="0 0 4 6" ><path d="M1 1l2 2-2 2" fill="none" stroke="#555" stroke-width="0.75"/></svg>
<svg style="left:37.00px;top:295.60px" width="7" height="7.6" viewBox="0 0 7 7.6" ><rect x=".4" y=".2" width="6.2" height="7.2" fill="#f3dcee"/><path d="M.4 2h6.2M.4 3.8h6.2M.4 5.6h6.2M2.5.2v7.2M4.6.2v7.2" stroke="#ecc6e3" stroke-width=".5"/></svg>
<div class="t" style="left:47.6px;top:296.19px;font-size:6.5px;letter-spacing:-0.456px;">Datasets</div>
<svg style="left:29.50px;top:305.60px" width="4" height="6" viewBox="0 0 4 6" ><path d="M1 1l2 2-2 2" fill="none" stroke="#555" stroke-width="0.75"/></svg>
<svg style="left:36.50px;top:304.40px" width="8" height="8" viewBox="0 0 8 8" ><path d="M3.6 4.8V.6" stroke="#2f9e44" stroke-width=".7"/><path d="M2.6 1.8l1-1.4 1 1.4z" fill="#2f9e44"/><path d="M3.6 4.8L.6 6.6" stroke="#2f7fd0" stroke-width=".7"/><path d="M3.6 4.8l3.8 1" stroke="#d6336c" stroke-width=".7"/><path d="M6.4 4.8l1.4 1.2-1.8.6z" fill="#d6336c"/></svg>
<div class="t" style="left:47.6px;top:305.19px;font-size:6.5px;letter-spacing:-0.444px;">Views</div>
<svg style="left:29.50px;top:314.60px" width="4" height="6" viewBox="0 0 4 6" ><path d="M1 1l2 2-2 2" fill="none" stroke="#555" stroke-width="0.75"/></svg>
<div class="t" style="left:36.5px;top:313.2px;font-size:4px;line-height:4px;color:#b9359c;font-weight:bold;letter-spacing:-.25px">8.85<br>e-12</div>
<div class="t" style="left:47.6px;top:314.19px;font-size:6.5px;letter-spacing:-0.378px;">Derived Values</div>
<svg style="left:29.50px;top:323.60px" width="4" height="6" viewBox="0 0 4 6" ><path d="M1 1l2 2-2 2" fill="none" stroke="#555" stroke-width="0.75"/></svg>
<svg style="left:37.00px;top:322.70px" width="7" height="7.4" viewBox="0 0 7 7.4" ><rect x=".4" y=".4" width="6.2" height="6.6" fill="#f8e4f3" stroke="#b9359c" stroke-width=".6"/><path d="M2.5.4v6.6M4.6.4v6.6" stroke="#b9359c" stroke-width=".6"/></svg>
<div class="t" style="left:47.6px;top:323.19px;font-size:6.5px;letter-spacing:-0.415px;">Tables</div>
<svg style="left:29.50px;top:332.60px" width="4" height="6" viewBox="0 0 4 6" ><path d="M1 1l2 2-2 2" fill="none" stroke="#555" stroke-width="0.75"/></svg>
<svg style="left:36.50px;top:332.90px" width="8" height="5" viewBox="0 0 8 5" ><path d="M.3 2.6c1-3 2.4-3 3.6 0s2.6 3 3.8 0" stroke="#d873c0" stroke-width=".7" fill="none"/></svg>
<div class="t" style="left:47.6px;top:332.19px;font-size:6.5px;letter-spacing:-0.341px;">Probe Plot Group 1</div>
<svg style="left:29.50px;top:341.60px" width="4" height="6" viewBox="0 0 4 6" ><path d="M1 1l2 2-2 2" fill="none" stroke="#555" stroke-width="0.75"/></svg>
<svg style="left:36.80px;top:340.70px" width="7.4" height="7.4" viewBox="0 0 7.4 7.4" ><path d="M.3.3h4.2l2.6 2.4v4.4H.3z" fill="#b9359c"/><path d="M4.5.3v2.4h2.6" fill="#e9a9dc"/></svg>
<div class="t" style="left:47.6px;top:341.19px;font-size:6.5px;letter-spacing:-0.33px;">Stress (solid)</div>
<svg style="left:29.50px;top:350.60px" width="4" height="6" viewBox="0 0 4 6" ><path d="M1 1l2 2-2 2" fill="none" stroke="#555" stroke-width="0.75"/></svg>
<svg style="left:36.50px;top:349.60px" width="8" height="7.6" viewBox="0 0 8 7.6" ><path d="M.3 2L2 .3h5.6v5L6 7.2H.3z" fill="#d873c0"/><rect x=".3" y="2" width="5.7" height="5.2" fill="#b9359c"/><path d="M6 2L7.6.3v5L6 7.2z" fill="#8e1f76"/><rect x="3.2" y="2" width="2.8" height="2.2" fill="#e9a9dc"/></svg>
<div class="t" style="left:47.6px;top:350.19px;font-size:6.5px;letter-spacing:-0.364px;">Stress, 3D (solid)</div>
<svg style="left:29.50px;top:359.60px" width="4" height="6" viewBox="0 0 4 6" ><path d="M1 1l2 2-2 2" fill="none" stroke="#555" stroke-width="0.75"/></svg>
<svg style="left:36.80px;top:358.70px" width="7.4" height="7.4" viewBox="0 0 7.4 7.4" ><path d="M.3.3h4.2l2.6 2.4v4.4H.3z" fill="#b9359c"/><path d="M4.5.3v2.4h2.6" fill="#e9a9dc"/></svg>
<div class="t" style="left:47.6px;top:359.19px;font-size:6.5px;letter-spacing:-0.365px;">Stress (solid) 1</div>
<svg style="left:29.50px;top:368.60px" width="4" height="6" viewBox="0 0 4 6" ><path d="M1 1l2 2-2 2" fill="none" stroke="#555" stroke-width="0.75"/></svg>
<svg style="left:36.50px;top:367.60px" width="8" height="7.6" viewBox="0 0 8 7.6" ><path d="M.3 2L2 .3h5.6v5L6 7.2H.3z" fill="#d873c0"/><rect x=".3" y="2" width="5.7" height="5.2" fill="#b9359c"/><path d="M6 2L7.6.3v5L6 7.2z" fill="#8e1f76"/></svg>
<div class="t" style="left:47.6px;top:368.19px;font-size:6.5px;letter-spacing:-0.388px;">Stress, 3D (solid) 1</div>
<svg style="left:36.30px;top:376.70px" width="8.4" height="7.4" viewBox="0 0 8.4 7.4" ><path d="M.4 1.400L2.200.3h5.400L8 5.200 5.600 7H1z" fill="#b9359c"/><path d="M1.600 2.400l4.400 3.400M3.400 1.600l3.600 2.800M1.200 4.200l2.600 2" stroke="#eab4df" stroke-width=".55" fill="none"/></svg>
<div class="t" style="left:47.6px;top:377.19px;font-size:6.5px;letter-spacing:-0.298px;">Export</div>
<svg style="left:36.50px;top:385.40px" width="8" height="8" viewBox="0 0 8 8" ><rect x=".4" y=".8" width="6" height="6.8" rx=".6" fill="#fbeef8" stroke="#dc8acb" stroke-width=".6"/><path d="M2 5.8l.5-1.6L6.6.4l1 1L3.6 5.3z" fill="#b9359c"/></svg>
<div class="t" style="left:47.6px;top:386.19px;font-size:6.5px;letter-spacing:-0.394px;">Reports</div>
<div class="panel" style="left:222.7px;top:89.2px;width:292.09999999999997px;height:434px"></div>
<div class="ttl" style="left:226.5px;top:-6.67px;font-size:10.8px;letter-spacing:-0.253px;top:93.4px">Settings</div>
<svg style="left:488.10px;top:96.30px" width="5" height="3.4" viewBox="0 0 5 3.4" ><path d="M.5.5l2 2 2-2" fill="none" stroke="#b4b4b4" stroke-width=".7"/></svg><svg style="left:497.50px;top:95.50px" width="5" height="5" viewBox="0 0 5 5" ><rect x=".4" y=".4" width="4.2" height="4.2" fill="none" stroke="#a8a8a8" stroke-width=".6"/><path d="M.4 1h4.2" stroke="#a8a8a8" stroke-width=".9"/></svg><svg style="left:506.80px;top:94.70px" width="4" height="6" viewBox="0 0 4 6" ><path d="M1 .4h2v2.6l.6.8H.4l.6-.8zM2 3.8v2" fill="none" stroke="#b4b4b4" stroke-width=".6"/></svg>
<div class="t" style="left:226.1px;top:107.00px;font-size:6.8px;letter-spacing:-0.145px;color:#345a9c">Uncertainty Quantification</div>
<svg style="left:227.90px;top:119.80px" width="5.4" height="3.2" viewBox="0 0 5.4 3.2" ><rect x="0" y="0" width="5.4" height="1.3" fill="#1a9cc0"/><rect x="0" y="1.9" width="5.4" height="1.3" fill="#1a9cc0"/><rect x="0" y="1.3" width="5.4" height=".6" fill="#8fd0e4"/></svg>
<div class="t" style="left:236.6px;top:117.99px;font-size:6.5px;letter-spacing:-0.196px;">Compute</div>
<div class="t" style="left:225.4px;top:134.49px;font-size:6.5px;letter-spacing:-0.318px;">Label:</div>
<div class="inp" style="left:244.9px;top:133.10px;width:252.9px;height:9.4px"></div><div class="t" style="left:247.5px;top:134.49px;font-size:6.5px;letter-spacing:-0.17px;">Uncertainty Quantification</div>
<div class="a" style="left:502.8px;top:132.8px;width:9.4px;height:9.6px;background:#ececec;border:1px solid #dcdcdc;border-radius:1px"></div>
<svg style="left:504.10px;top:134.80px" width="7" height="6" viewBox="0 0 7 6" ><rect x="1" y=".3" width="5.6" height="4.6" fill="#fff" stroke="#777" stroke-width=".6"/><path d="M1 1.2h5.6" stroke="#777" stroke-width=".8"/><path d="M2.4 3.2h3" stroke="#1aa77c" stroke-width=".9"/><path d="M.2 4.4l1.4.8-1.4.8z" fill="#1aa77c"/></svg>
<div class="hl" style="left:223.2px;top:147.8px;width:291.09999999999997px"></div>
<div class="hl" style="left:223.2px;top:162.1px;width:291.09999999999997px"></div>
<div class="hl" style="left:223.2px;top:176.4px;width:291.09999999999997px"></div>
<div class="hl" style="left:223.2px;top:190.8px;width:291.09999999999997px"></div>
<div class="hl" style="left:223.2px;top:205.3px;width:291.09999999999997px"></div>
<div class="hl" style="left:223.2px;top:331.8px;width:291.09999999999997px"></div>
<div class="hl" style="left:223.2px;top:431.4px;width:291.09999999999997px"></div>
<div class="hl" style="left:223.2px;top:445.5px;width:291.09999999999997px"></div>
<div class="hl" style="left:223.2px;top:459.8px;width:291.09999999999997px"></div>
<svg style="left:225.80px;top:151.80px" width="4" height="6" viewBox="0 0 4 6" ><path d="M1 1l2 2-2 2" fill="none" stroke="#333" stroke-width="1.1"/></svg>
<div class="sec" style="left:235.7px;top:150.70000000000002px;letter-spacing:0.007px">Uncertainty Quantification Settings</div>
<svg style="left:225.80px;top:166.20px" width="4" height="6" viewBox="0 0 4 6" ><path d="M1 1l2 2-2 2" fill="none" stroke="#333" stroke-width="1.1"/></svg>
<div class="sec" style="left:235.7px;top:165.1px;letter-spacing:0.029px">Quantities of Interest</div>
<svg style="left:225.80px;top:180.70px" width="4" height="6" viewBox="0 0 4 6" ><path d="M1 1l2 2-2 2" fill="none" stroke="#333" stroke-width="1.1"/></svg>
<div class="sec" style="left:235.7px;top:179.6px;letter-spacing:0.017px">Input Parameters</div>
<svg style="left:225.80px;top:195.20px" width="4" height="6" viewBox="0 0 4 6" ><path d="M1 1l2 2-2 2" fill="none" stroke="#333" stroke-width="1.1"/></svg>
<div class="sec" style="left:235.7px;top:194.1px;letter-spacing:-0.066px">Sampling Settings</div>
<svg style="left:224.80px;top:211.10px" width="6" height="4" viewBox="0 0 6 4" ><path d="M1 1l2 2 2-2" fill="none" stroke="#2f6fc0" stroke-width=".9"/></svg>
<div class="sec" style="left:235.7px;top:208.70000000000002px;letter-spacing:-0.047px">Experimental Data Settings</div>
<svg style="left:224.80px;top:340.10px" width="6" height="4" viewBox="0 0 6 4" ><path d="M1 1l2 2 2-2" fill="none" stroke="#2f6fc0" stroke-width=".9"/></svg>
<div class="sec" style="left:235.7px;top:337.7px;letter-spacing:-0.032px">Surrogate Model Verification</div>
<svg style="left:225.80px;top:435.20px" width="4" height="6" viewBox="0 0 4 6" ><path d="M1 1l2 2-2 2" fill="none" stroke="#333" stroke-width="1.1"/></svg>
<div class="sec" style="left:235.7px;top:434.09999999999997px;letter-spacing:-0.167px">Surrogate-Based Response Surface</div>
<svg style="left:225.80px;top:450.00px" width="4" height="6" viewBox="0 0 4 6" ><path d="M1 1l2 2-2 2" fill="none" stroke="#333" stroke-width="1.1"/></svg>
<div class="sec" style="left:235.7px;top:448.9px;letter-spacing:0.023px">Output While Solving</div>
<svg style="left:225.80px;top:464.30px" width="4" height="6" viewBox="0 0 4 6" ><path d="M1 1l2 2-2 2" fill="none" stroke="#333" stroke-width="1.1"/></svg>
<div class="sec" style="left:235.7px;top:463.2px;letter-spacing:-0.067px">Advanced Settings</div>
<div class="t" style="left:225.3px;top:225.99px;font-size:6.5px;letter-spacing:-0.271px;">Experimental data table:</div>
<div class="sel" style="left:312.7px;top:224.50px;width:199.5px;height:9.6px;"></div><div class="t" style="left:319.7px;top:225.99px;font-size:6.5px;letter-spacing:-0.451px;">Table 2</div><svg style="left:504.80px;top:228.00px" width="4" height="3" viewBox="0 0 4 3" ><path d="M0 .4h4L2 2.8z" fill="#222"/></svg>
<div class="a" style="left:225.2px;top:237.4px;width:287px;height:52px;background:#f3f3f3;border:1px solid #dadada"></div>
<div class="a" style="left:278.4px;top:238px;width:1px;height:51px;background:#d8d8d8"></div>
<div class="a" style="left:371.6px;top:238px;width:1px;height:51px;background:#d8d8d8"></div>
<div class="a" style="left:225.7px;top:263.3px;width:286px;height:1px;background:#d0d0d0"></div>
<div class="a" style="left:225.7px;top:276.5px;width:286px;height:1px;background:#d0d0d0"></div>
<svg style="left:227.70px;top:239.70px" width="4" height="3.4" viewBox="0 0 4 3.4" ><path d="M0 0l1.8 1.7L0 3.4zM2 0l1.8 1.7L2 3.4z" fill="#222"/></svg>
<div class="t" style="left:234.8px;top:242.09px;font-size:6.5px;letter-spacing:-0.278px;">Columns</div>
<div class="t" style="left:281.6px;top:242.09px;font-size:6.5px;letter-spacing:-0.648px;">Type</div>
<div class="t" style="left:374.8px;top:242.09px;font-size:6.5px;letter-spacing:-0.323px;">Settings</div>
<div class="t" style="left:227.2px;top:253.89px;font-size:6.5px;letter-spacing:-0.311px;">movez (m)</div>
<div class="a" style="left:280.2px;top:252.0px;width:90.6px;height:10.4px;background:#f6f6f6;border-radius:1.5px"></div>
<div class="t" style="left:286.4px;top:253.89px;font-size:6.5px;letter-spacing:-0.303px;">Experimental parameter</div>
<svg style="left:363.60px;top:255.90px" width="4" height="3" viewBox="0 0 4 3" ><path d="M0 .4h4L2 2.8z" fill="#222"/></svg>
<div class="t" style="left:374.4px;top:253.89px;font-size:6.5px;letter-spacing:-0.469px;">movez</div>
<div class="t" style="left:227.2px;top:266.79px;font-size:6.5px;letter-spacing:-0.221px;">r_change + error...</div>
<div class="a" style="left:280.2px;top:264.90000000000003px;width:90.6px;height:10.4px;background:#f6f6f6;border-radius:1.5px"></div>
<div class="t" style="left:286.4px;top:266.79px;font-size:6.5px;letter-spacing:-0.193px;">Quantity of interest</div>
<svg style="left:363.60px;top:268.80px" width="4" height="3" viewBox="0 0 4 3" ><path d="M0 .4h4L2 2.8z" fill="#222"/></svg>
<div class="t" style="left:374.4px;top:266.79px;font-size:6.5px;letter-spacing:-0.359px;">comp1.r_change</div>
<div class="t" style="left:227.2px;top:279.79px;font-size:6.5px;letter-spacing:-0.257px;">tensile_force + er...</div>
<div class="a" style="left:280.2px;top:277.90000000000003px;width:90.6px;height:10.4px;background:#f6f6f6;border-radius:1.5px"></div>
<div class="t" style="left:286.4px;top:279.79px;font-size:6.5px;letter-spacing:-0.193px;">Quantity of interest</div>
<svg style="left:363.60px;top:281.80px" width="4" height="3" viewBox="0 0 4 3" ><path d="M0 .4h4L2 2.8z" fill="#222"/></svg>
<div class="t" style="left:374.4px;top:279.79px;font-size:6.5px;letter-spacing:-0.304px;">comp1.tensile_force</div>
<div class="t" style="left:225.3px;top:295.29px;font-size:6.5px;letter-spacing:-0.349px;">Name:</div>
<div class="sel" style="left:312.7px;top:293.60px;width:199.5px;height:10px;background:#cfe6f9;border-color:#8cc2f2;border-bottom:1px solid #62a8ea;"></div><div class="t" style="left:319.7px;top:295.29px;font-size:6.5px;letter-spacing:-0.304px;">comp1.tensile_force</div><svg style="left:504.80px;top:297.30px" width="4" height="3" viewBox="0 0 4 3" ><path d="M0 .4h4L2 2.8z" fill="#222"/></svg>
<div class="t" style="left:225.3px;top:308.69px;font-size:6.5px;letter-spacing:-0.219px;">Measurement uncertainty type:</div>
<div class="sel" style="left:312.7px;top:307.20px;width:199.5px;height:9.6px;"></div><div class="t" style="left:319.7px;top:308.69px;font-size:6.5px;letter-spacing:-0.305px;">Experimental data</div><svg style="left:504.80px;top:310.70px" width="4" height="3" viewBox="0 0 4 3" ><path d="M0 .4h4L2 2.8z" fill="#222"/></svg>
<div class="t" style="left:225.3px;top:321.09px;font-size:6.5px;letter-spacing:-0.244px;">Measurement uncertainty:</div>
<div class="inp" style="left:312.7px;top:319.80px;width:199.5px;height:9.4px"></div><div class="t" style="left:315.3px;top:321.19px;font-size:6.5px;letter-spacing:-0.648px;">1e4</div>
<div class="t" style="left:225.3px;top:354.89px;font-size:6.5px;letter-spacing:-0.195px;">Verification quantities of interest table:</div>
<div class="sel" style="left:331px;top:353.40px;width:166.8px;height:9.6px;"></div><div class="t" style="left:338px;top:354.89px;font-size:6.5px;letter-spacing:-0.301px;">New</div><svg style="left:490.40px;top:356.90px" width="4" height="3" viewBox="0 0 4 3" ><path d="M0 .4h4L2 2.8z" fill="#222"/></svg>
<div class="a" style="left:502.2px;top:353.4px;width:9.6px;height:9.6px;background:#f1f1f1;border-radius:1px"></div>
<svg style="left:504.00px;top:355.20px" width="6" height="6" viewBox="0 0 6 6" ><path d="M1 .6v4.8h2M3 2h2.4v3.4H3z" fill="none" stroke="#c6c6c6" stroke-width=".6"/></svg>
<div class="t" style="left:225.3px;top:368.89px;font-size:6.5px;letter-spacing:-0.268px;">Verification parameters source:</div>
<div class="sel" style="left:331px;top:367.40px;width:181.2px;height:9.6px;"></div><div class="t" style="left:338px;top:368.89px;font-size:6.5px;letter-spacing:-0.252px;">From surrogate model</div><svg style="left:504.80px;top:370.90px" width="4" height="3" viewBox="0 0 4 3" ><path d="M0 .4h4L2 2.8z" fill="#222"/></svg>
<div class="a" style="left:225.3px;top:384.3px;width:5px;height:1px;background:#dcdcdc"></div>
<div class="t" style="left:231.8px;top:380.89px;font-size:6.5px;letter-spacing:-0.249px;">Verification parameters sampling settings</div>
<div class="a" style="left:341px;top:384.3px;width:171px;height:1px;background:#e2e2e2"></div>
<div class="t" style="left:225.3px;top:392.39px;font-size:6.5px;letter-spacing:-0.146px;">Number of verification points:</div>
<div class="inp" style="left:331px;top:391.10px;width:181.2px;height:9.4px"></div><div class="t" style="left:333.6px;top:392.49px;font-size:6.5px;letter-spacing:-0.765px;">10</div>
<div class="t" style="left:225.3px;top:405.29px;font-size:6.5px;letter-spacing:-0.339px;">Random seed type:</div>
<div class="sel" style="left:331px;top:403.80px;width:181.2px;height:9.6px;"></div><div class="t" style="left:338px;top:405.29px;font-size:6.5px;letter-spacing:-0.145px;">Automatic</div><svg style="left:504.80px;top:407.30px" width="4" height="3" viewBox="0 0 4 3" ><path d="M0 .4h4L2 2.8z" fill="#222"/></svg>
<div class="t" style="left:225.3px;top:417.09px;font-size:6.5px;letter-spacing:-0.241px;">Initial random seed:</div>
<div class="inp" style="left:331px;top:415.80px;width:181.2px;height:9.4px"></div><div class="t" style="left:333.6px;top:417.19px;font-size:6.5px;letter-spacing:-0.615px;">108714</div>
<svg style="left:458.20px;top:436.00px" width="4" height="4.4" viewBox="0 0 4 4.4" ><path d="M.2.2l3.6 2-3.6 2z" fill="#1aa77c"/></svg>
<div class="t" style="left:466.2px;top:434.89px;font-size:6.5px;letter-spacing:-0.474px;">Response Surface</div>
<div class="panel" style="left:519px;top:89.2px;width:437.5px;height:356.6px;overflow:hidden"></div>
<div class="ttl" style="left:522.4px;top:-6.67px;font-size:10.8px;letter-spacing:-0.452px;top:93.4px">Graphics</div>
<svg style="left:929.80px;top:96.30px" width="5" height="3.4" viewBox="0 0 5 3.4" ><path d="M.5.5l2 2 2-2" fill="none" stroke="#b4b4b4" stroke-width=".7"/></svg><svg style="left:939.20px;top:95.50px" width="5" height="5" viewBox="0 0 5 5" ><rect x=".4" y=".4" width="4.2" height="4.2" fill="none" stroke="#a8a8a8" stroke-width=".6"/><path d="M.4 1h4.2" stroke="#a8a8a8" stroke-width=".9"/></svg><svg style="left:948.50px;top:94.70px" width="4" height="6" viewBox="0 0 4 6" ><path d="M1 .4h2v2.6l.6.8H.4l.6-.8zM2 3.8v2" fill="none" stroke="#b4b4b4" stroke-width=".6"/></svg>
<svg style="left:0;top:0" width="960" height="540" viewBox="0 0 960 540">
<defs>
 <linearGradient id="bg" x1="0" y1="0" x2="0" y2="1"><stop offset="0" stop-color="#fafbfe"/><stop offset=".1" stop-color="#f5f9fe"/><stop offset=".45" stop-color="#eef4fc"/><stop offset="1" stop-color="#e1ecfa"/></linearGradient>
 <filter id="b1" x="-20%" y="-50%" width="140%" height="200%"><feGaussianBlur stdDeviation="2.6"/></filter>
 <filter id="b2" x="-50%" y="-50%" width="200%" height="200%"><feGaussianBlur stdDeviation="1.6"/></filter>
 <filter id="b3" x="-50%" y="-50%" width="200%" height="200%"><feGaussianBlur stdDeviation=".8"/></filter>
 <filter id="b4" x="-50%" y="-50%" width="200%" height="200%"><feGaussianBlur stdDeviation="3.5"/></filter>
 <linearGradient id="face" gradientUnits="userSpaceOnUse" x1="553" y1="287" x2="760" y2="351">
  <stop offset="0" stop-color="#c2062c"/><stop offset=".3" stop-color="#c6042a"/><stop offset=".43" stop-color="#da0426"/>
  <stop offset=".5" stop-color="#f40618"/><stop offset=".545" stop-color="#ff1c0c"/><stop offset=".558" stop-color="#ff7c00"/>
  <stop offset=".572" stop-color="#fff000"/><stop offset=".625" stop-color="#f6fa00"/><stop offset=".66" stop-color="#6ee846"/>
  <stop offset=".692" stop-color="#0cf0dc"/><stop offset=".74" stop-color="#08f4f8"/><stop offset="1" stop-color="#1cf0fc"/>
 </linearGradient>
 <radialGradient id="lav" gradientUnits="userSpaceOnUse" cx="609" cy="354" r="280">
  <stop offset="0" stop-color="#30e8ff" stop-opacity="0"/><stop offset=".51" stop-color="#30e8ff" stop-opacity="0"/>
  <stop offset=".55" stop-color="#5cccff" stop-opacity=".7"/><stop offset=".585" stop-color="#8aa8ff" stop-opacity="1"/>
  <stop offset=".63" stop-color="#b0a0fa"/><stop offset=".71" stop-color="#c8a8fc"/><stop offset=".85" stop-color="#bc9cf8"/><stop offset="1" stop-color="#ac8ef2"/>
 </radialGradient>
 <linearGradient id="lav2" gradientUnits="userSpaceOnUse" x1="780" y1="285" x2="850" y2="225">
  <stop offset="0" stop-color="#caaafc" stop-opacity=".9"/><stop offset=".5" stop-color="#c0a0f8" stop-opacity=".3"/><stop offset="1" stop-color="#a98bf0" stop-opacity=".9"/>
 </linearGradient>
 <linearGradient id="cap" gradientUnits="userSpaceOnUse" x1="552" y1="258" x2="566" y2="334">
  <stop offset="0" stop-color="#b23c58"/><stop offset=".5" stop-color="#c5526c"/><stop offset="1" stop-color="#cf6079"/>
 </linearGradient>
 <linearGradient id="plane" gradientUnits="userSpaceOnUse" x1="561" y1="294" x2="668.35" y2="137.25">
  <stop offset="0" stop-color="#5e1a2c"/><stop offset=".25" stop-color="#5c1628"/><stop offset=".33" stop-color="#6a1220"/>
  <stop offset=".37" stop-color="#7a181a"/><stop offset=".39" stop-color="#7c4a18"/><stop offset=".412" stop-color="#6c7e22"/>
  <stop offset=".452" stop-color="#3e8a56"/><stop offset=".538" stop-color="#3a8886"/><stop offset=".634" stop-color="#4a7898"/>
  <stop offset=".69" stop-color="#5c6a98"/><stop offset=".79" stop-color="#6c6a9a"/><stop offset=".91" stop-color="#847cb6"/><stop offset="1" stop-color="#a092d8"/>
 </linearGradient>
 <linearGradient id="planeS" gradientUnits="userSpaceOnUse" x1="800" y1="282" x2="804" y2="318">
  <stop offset="0" stop-color="#30304a" stop-opacity=".22"/><stop offset=".5" stop-color="#50507a" stop-opacity="0"/><stop offset="1" stop-color="#a898f0" stop-opacity=".4"/>
 </linearGradient>
 <linearGradient id="planeMg" gradientUnits="userSpaceOnUse" x1="690" y1="0" x2="760" y2="0"><stop offset="0" stop-color="#000"/><stop offset="1" stop-color="#fff"/></linearGradient>
 <mask id="planeM" maskUnits="userSpaceOnUse" x="540" y="270" width="380" height="60"><rect x="540" y="270" width="380" height="60" fill="url(#planeMg)"/></mask>
 <linearGradient id="shaft" gradientUnits="userSpaceOnUse" x1="620" y1="303.4" x2="622.6" y2="329.4">
  <stop offset="0" stop-color="#ac2440"/><stop offset=".2" stop-color="#921c36"/><stop offset=".3" stop-color="#6a1226"/><stop offset=".38" stop-color="#500a1c"/>
  <stop offset=".7" stop-color="#520a1c"/><stop offset=".88" stop-color="#64102a"/><stop offset="1" stop-color="#7c162e"/>
 </linearGradient>
 <linearGradient id="shaftX" gradientUnits="userSpaceOnUse" x1="655" y1="0" x2="700" y2="0">
  <stop offset="0" stop-color="#400050" stop-opacity="0"/><stop offset=".6" stop-color="#480048" stop-opacity=".8"/><stop offset="1" stop-color="#50004a" stop-opacity=".95"/>
 </linearGradient>
 <linearGradient id="bowl" gradientUnits="userSpaceOnUse" x1="655" y1="291" x2="776" y2="324">
  <stop offset="0" stop-color="#4c0048" stop-opacity="0"/><stop offset=".2" stop-color="#4c0048" stop-opacity=".85"/><stop offset=".3" stop-color="#4c0048"/><stop offset=".39" stop-color="#5a0044"/><stop offset=".455" stop-color="#a00028"/>
  <stop offset=".51" stop-color="#e81208"/><stop offset=".558" stop-color="#f87800"/><stop offset=".61" stop-color="#d8e010"/>
  <stop offset=".68" stop-color="#38cc48"/><stop offset=".75" stop-color="#18a8a8"/><stop offset=".82" stop-color="#5a78e0"/>
  <stop offset=".895" stop-color="#a488f0"/><stop offset=".945" stop-color="#d8c4f8"/><stop offset=".985" stop-color="#fbf6fb"/>
 </linearGradient>
 <linearGradient id="bowlS" gradientUnits="userSpaceOnUse" x1="735" y1="306" x2="731" y2="352">
  <stop offset="0" stop-color="#555" stop-opacity="0"/><stop offset=".45" stop-color="#777" stop-opacity="0"/>
  <stop offset=".68" stop-color="#8a8288" stop-opacity=".75"/><stop offset=".85" stop-color="#847c80" stop-opacity=".95"/><stop offset="1" stop-color="#6e686c" stop-opacity="1"/>
 </linearGradient>
 <linearGradient id="bowlMg" gradientUnits="userSpaceOnUse" x1="698" y1="0" x2="722" y2="0"><stop offset="0" stop-color="#000"/><stop offset="1" stop-color="#fff"/></linearGradient>
 <mask id="bowlM" maskUnits="userSpaceOnUse" x="640" y="290" width="150" height="70"><rect x="640" y="290" width="150" height="70" fill="url(#bowlMg)"/></mask>
 <linearGradient id="cyl" gradientUnits="userSpaceOnUse" x1="830" y1="312" x2="833.4" y2="342">
  <stop offset="0" stop-color="#9484e6"/><stop offset=".12" stop-color="#8272d8"/><stop offset=".4" stop-color="#665e96"/>
  <stop offset=".68" stop-color="#4c4658"/><stop offset=".88" stop-color="#5a5462"/><stop offset="1" stop-color="#746e7a"/>
 </linearGradient>
 <linearGradient id="rim" gradientUnits="userSpaceOnUse" x1="775" y1="317" x2="750" y2="352">
  <stop offset="0" stop-color="#fff"/><stop offset=".5" stop-color="#f4ecec"/><stop offset="1" stop-color="#c8c0bc"/>
 </linearGradient>
 <linearGradient id="cbar" x1="0" y1="0" x2="0" y2="1">
  <stop offset="0" stop-color="#5c1466"/><stop offset=".03" stop-color="#7a1668"/><stop offset=".08" stop-color="#b00a40"/>
  <stop offset=".13" stop-color="#d80420"/><stop offset=".19" stop-color="#f01808"/><stop offset=".25" stop-color="#fa5800"/>
  <stop offset=".31" stop-color="#fc9c00"/><stop offset=".37" stop-color="#f4d800"/><stop offset=".42" stop-color="#d4ec18"/>
  <stop offset=".465" stop-color="#a0ec3c"/><stop offset=".505" stop-color="#6ee868"/><stop offset=".55" stop-color="#38e4a4"/>
  <stop offset=".62" stop-color="#1cdce8"/><stop offset=".68" stop-color="#30bcf8"/><stop offset=".74" stop-color="#5c9cf4"/><stop offset=".79" stop-color="#7c8cf2"/>
  <stop offset=".85" stop-color="#a08cf0"/><stop offset=".91" stop-color="#c4acf6"/><stop offset=".97" stop-color="#e6dcf8"/><stop offset="1" stop-color="#f4f0fa"/>
 </linearGradient>
 <clipPath id="cv"><rect x="519" y="119.5" width="437.5" height="326.3"/></clipPath>
 <clipPath id="faceC"><path d="M553.3 255.8L640 254.6L662 254.4C676 254.2 687 251 694 246.6C700 242.6 703 239.4 704.4 237.6L716 224.2L850 227.5L866 279.3L561 294Z"/></clipPath>
 <clipPath id="bowlC"><path d="M655 298L717.8 300L736.7 305L755.6 309.5L774.5 317C772 324 770 329 767 332.8C764 338 761 342 758 345.4C755 348.6 752 350.4 748 351.2L739.2 352.4C735 352 731.5 351 727.9 349.2C724 347 721 345.4 717.8 342.9C715 340.6 712.6 338 710.2 335.3C707.6 332.6 705.2 330.6 702.7 329C699.4 327 696 326 692.6 325.3L680 323.6L660 324.4L655 325Z"/></clipPath>
</defs>
<rect x="519" y="119.5" width="437.5" height="326.3" fill="url(#bg)"/>
<g clip-path="url(#cv)">
 <!-- floor shadow -->
 <path d="M533 378L560 371L700 357L745 352L890 338.500L915 341.500L915 347L760 361L700 367.500L560 382L537 383Z" fill="#8e98a8" opacity=".34" filter="url(#b1)"/>
 <path d="M720 352L900 337L906 334L901 342L745 358Z" fill="#8e98a8" opacity=".12" filter="url(#b4)"/>
 <!-- end cap -->
 <path d="M553.3 255.8C548 262 544.8 276 545.3 290C546 309 554 330 564 335.2C570 333 575.4 323 576.1 313.3L571.7 306.7L561 293.6Z" fill="url(#cap)"/>
 <!-- cylinder surface of shaft -->
 <path d="M570.9 305.5L600 303.1L640 300.7L665 300.6L680 301.4L700 302.4L700 328C697 326.4 695 325.8 692.6 325.3L680 323.6L660 324.4L640 326.6L600 331.2L564 335.2C570 333 575.4 323 576.1 313.3Z" fill="url(#shaft)"/>
 <!-- block cylinder surface -->
 <path d="M774.5 317L910 304.2C907 311 903 317.4 898 321.7C892 327 885 331 876.7 333.3L790 345.8L748 351.2C752 350.4 755 348.6 758 345.4C761 342 764 338 767 332.8C770 329 772 324 774.5 317Z" fill="url(#cyl)"/>
 <!-- fillet bowl -->
 <g clip-path="url(#bowlC)">
  <rect x="650" y="296" width="132" height="62" fill="url(#bowl)"/>
  <rect x="650" y="296" width="132" height="62" fill="url(#bowlS)" mask="url(#bowlM)"/>
  <ellipse cx="690" cy="314" rx="11" ry="6" fill="#3a004c" opacity=".7" filter="url(#b2)"/>
  <ellipse cx="752" cy="348" rx="9" ry="3.4" fill="#e4dcd8" opacity=".8" filter="url(#b2)"/>
  <ellipse cx="719" cy="341" rx="8" ry="5" fill="#3c5a4c" opacity=".55" filter="url(#b2)" transform="rotate(40 719 341)"/>
 </g>
 <path d="M774.5 317C772 324 770 329 767 332.8C764 338 761 342 758 345.4C755 348.6 752 350.4 748 351.2" fill="none" stroke="url(#rim)" stroke-width="1.5" filter="url(#b3)"/>
</g>
</svg><div class="a" style="left:556px;top:274px;width:360px;height:48px;clip-path:path('M5.00 19.60L310.00 5.30L354.00 30.20L218.50 43.00L199.60 38.70L180.70 34.90L161.80 31.10L144.00 29.60L124.00 28.60L109.00 27.80L84.00 27.90L44.00 30.30L15.70 32.70Z');background:conic-gradient(from 270deg at 238px 104px,#5e1a2c 0deg,#5e1a2c 19.8deg,#5c1628 29.7deg,#6a1220 34.6deg,#7a181a 36.6deg,#7c4a18 38.4deg,#6c7e22 40.4deg,#3e8a56 44.4deg,#3a8886 54.6deg,#4a7898 69.6deg,#5c6a98 79.4deg,#6c6a9a 99.4deg,#847cb6 126deg,#a092d8 147.5deg,#a092d8 200deg,#5e1a2c 360deg)"></div><svg style="left:0;top:0" width="960" height="540" viewBox="0 0 960 540">
<g clip-path="url(#cv)">
 <path d="M690 287.6L866 279.3L910 304.2L774.5 317L755.6 312.7L736.7 308.9L717.8 305.1L700 303.6L690 303.1Z" fill="url(#planeS)" mask="url(#planeM)"/>
 <path d="M561 294.4L690 288" stroke="#3c0a16" stroke-width="1.6" opacity=".35" filter="url(#b3)"/>
 <path d="M866 279.3L910 304.2L872 307.800Z" fill="#b4a8ee" opacity=".3" filter="url(#b3)"/>
 <path d="M774.5 317L910 304.2" stroke="#9a8af0" stroke-width="1.4" opacity=".7" filter="url(#b3)"/>
</g>
</svg><div class="a" style="left:541px;top:218px;width:332px;height:80px;clip-path:path('M12.30 37.80L99.00 36.60L121.00 36.40C135.00 36.20 146.00 33.00 153.00 28.60C159.00 24.60 162.00 21.40 163.40 19.60L175.00 6.20L309.00 9.50L325.00 61.30L20.00 76.00Z');background:conic-gradient(from 0deg at 157px -3px,#b898f4 0deg,#b494f2 100deg,#c4a4fb 116deg,#b8a4fc 125deg,#9ca8ff 131.5deg,#80b6ff 137deg,#3ce4fe 144deg,#12fafc 152deg,#0cfcf2 170deg,#30f09c 175deg,#8ae830 178.5deg,#e6f600 182deg,#fff400 186deg,#fff000 192.5deg,#ffa000 195deg,#ff2808 198deg,#f20818 206deg,#da0426 220deg,#c8042a 236deg,#c2062c 270deg,#c2062c 360deg)"></div><svg style="left:0;top:0" width="960" height="540" viewBox="0 0 960 540">
<g clip-path="url(#faceC)">
  <ellipse cx="790" cy="266" rx="46" ry="26" fill="#d0b0ff" opacity=".45" filter="url(#b4)"/>
  <path d="M646 253L672 252.6L668 256L657 263.5L653 257.5Z" fill="#56126c" opacity=".95" filter="url(#b3)"/><ellipse cx="662" cy="262" rx="12" ry="6" fill="#ff1020" opacity=".35" filter="url(#b2)"/>
  <ellipse cx="725" cy="227.5" rx="9" ry="4.6" fill="#fff" opacity=".95" filter="url(#b2)"/><ellipse cx="722" cy="231" rx="6" ry="4" fill="#f4ecff" opacity=".7" filter="url(#b2)"/>
  <ellipse cx="741" cy="262" rx="7" ry="20" fill="#20f0fe" opacity=".8" filter="url(#b4)" transform="rotate(-28 741 262)"/><ellipse cx="733" cy="236" rx="10" ry="6" fill="#dcd0ff" opacity=".45" filter="url(#b4)"/>
</g>
<path d="M703.6 238.6L716.4 223.8L712.6 231.6L707.2 237.2Z" fill="#34343e"/>
<rect x="920.8" y="154" width="7.9" height="273.8" fill="url(#cbar)" stroke="#8a8a8a" stroke-width=".4"/><path d="M920.8 162.5h1.4M927.3 162.5h1.4" stroke="#222" stroke-width=".5"/><path d="M920.8 194.8h1.4M927.3 194.8h1.4" stroke="#222" stroke-width=".5"/><path d="M920.8 227.0h1.4M927.3 227.0h1.4" stroke="#222" stroke-width=".5"/><path d="M920.8 259.3h1.4M927.3 259.3h1.4" stroke="#222" stroke-width=".5"/><path d="M920.8 291.6h1.4M927.3 291.6h1.4" stroke="#222" stroke-width=".5"/><path d="M920.8 323.9h1.4M927.3 323.9h1.4" stroke="#222" stroke-width=".5"/><path d="M920.8 356.1h1.4M927.3 356.1h1.4" stroke="#222" stroke-width=".5"/><path d="M920.8 388.4h1.4M927.3 388.4h1.4" stroke="#222" stroke-width=".5"/><path d="M920.8 420.7h1.4M927.3 420.7h1.4" stroke="#222" stroke-width=".5"/><text x="933.4" y="164.8" font-family="DejaVu Sans,sans-serif" font-size="6.1" fill="#222">1.8</text><text x="933.4" y="197.0" font-family="DejaVu Sans,sans-serif" font-size="6.1" fill="#222">1.6</text><text x="933.4" y="229.3" font-family="DejaVu Sans,sans-serif" font-size="6.1" fill="#222">1.4</text><text x="933.4" y="261.6" font-family="DejaVu Sans,sans-serif" font-size="6.1" fill="#222">1.2</text><text x="933.4" y="293.8" font-family="DejaVu Sans,sans-serif" font-size="6.1" fill="#222">1</text><text x="933.4" y="326.1" font-family="DejaVu Sans,sans-serif" font-size="6.1" fill="#222">0.8</text><text x="933.4" y="358.4" font-family="DejaVu Sans,sans-serif" font-size="6.1" fill="#222">0.6</text><text x="933.4" y="390.6" font-family="DejaVu Sans,sans-serif" font-size="6.1" fill="#222">0.4</text><text x="933.4" y="422.9" font-family="DejaVu Sans,sans-serif" font-size="6.1" fill="#222">0.2</text>
<path d="M540.3 424.3L535 419.5" stroke="#3aa84a" stroke-width="1.2"/><path d="M532.6 417.3l3.9 1-2.6 2.8z" fill="#3aa84a"/>
<path d="M540.3 424.3L549 423.5" stroke="#4a7fd0" stroke-width="1.2"/><path d="M552.2 423.2l-3.6 1.9-.3-3.4z" fill="#3b6fc8"/>
<path d="M540.3 424.3L538.5 433" stroke="#e0206a" stroke-width="1.2"/><path d="M537.8 436.4l-1.3-3.9 3.4.6z" fill="#e0206a"/>
<text x="528.6" y="416.4" font-family="DejaVu Sans,sans-serif" font-size="6.6" fill="#222">y</text>
<text x="554.4" y="424.9" font-family="DejaVu Sans,sans-serif" font-size="6.6" fill="#222">z</text>
<text x="535" y="442.6" font-family="DejaVu Sans,sans-serif" font-size="6.6" fill="#222">x</text>
<text x="526.4" y="131.1" font-family="DejaVu Sans,sans-serif" font-size="6.1" textLength="172.8" lengthAdjust="spacingAndGlyphs" fill="#222">E0=2.5258E11 Pa, nu0=0.31292, movez=0.0018085 m</text><text x="704.8" y="132.8" font-family="DejaVu Sans,sans-serif" font-size="6.1" textLength="70" lengthAdjust="spacingAndGlyphs" fill="#222">von Mises stress (N/m<tspan dy="-2.2" font-size="4.2">2</tspan><tspan dy="2.2">)</tspan></text><text x="928.6" y="147.4" font-family="DejaVu Sans,sans-serif" font-size="6.1" fill="#222">×10<tspan dy="-2.6" font-size="4.3">10</tspan></text></svg>
<svg style="left:522.50px;top:108.10px" width="7.4" height="7.8" viewBox="0 0 7.4 7.8" ><circle cx="3" cy="3" r="2.5" fill="#e4effa" stroke="#4a94dc" stroke-width=".65"/><path d="M4.8 4.8L7 7.4" stroke="#4a94dc" stroke-width=".95"/><path d="M1.8 3h2.4M3 1.8v2.4" stroke="#2f7fd0" stroke-width=".6"/></svg><svg style="left:534.10px;top:108.10px" width="7.4" height="7.8" viewBox="0 0 7.4 7.8" ><circle cx="3" cy="3" r="2.5" fill="#e4effa" stroke="#4a94dc" stroke-width=".65"/><path d="M4.8 4.8L7 7.4" stroke="#4a94dc" stroke-width=".95"/><path d="M1.8 3h2.4" stroke="#2f7fd0" stroke-width=".6"/></svg><svg style="left:544.70px;top:107.80px" width="8.6" height="8.4" viewBox="0 0 8.6 8.4" ><rect x=".3" y="2.2" width="5" height="5" fill="none" stroke="#8db6e2" stroke-width=".6"/><g transform="translate(1.6 0)"><circle cx="3" cy="3" r="2.5" fill="#e4effa" stroke="#4a94dc" stroke-width=".65"/><path d="M4.8 4.8L7 7.4" stroke="#4a94dc" stroke-width=".95"/><path d="M1.8 3h2.4M3 1.8v2.4" stroke="#2f7fd0" stroke-width=".6"/></g></svg><svg style="left:556.00px;top:110.50px" width="4" height="3" viewBox="0 0 4 3" ><path d="M0 .4h4L2 2.8z" fill="#222"/></svg><svg style="left:565.40px;top:108.00px" width="8" height="8" viewBox="0 0 8 8" ><rect x=".4" y=".4" width="7.2" height="7.2" fill="#e6eef8" stroke="#8a95a5" stroke-width=".7"/><path d="M4 1.2v5.6M1.2 4h5.6" stroke="#2f7fd0" stroke-width=".8"/><path d="M4 .6l1 1.4H3zM4 7.4l1-1.4H3zM.6 4L2 3v2zM7.4 4L6 3v2z" fill="#2f7fd0"/></svg><div class="a" style="left:577.6px;top:107.5px;width:1px;height:9px;background:#e2e2e2"></div><svg style="left:580.80px;top:108.00px" width="8" height="8" viewBox="0 0 8 8" ><path d="M3.6 5V.6" stroke="#2f9e44" stroke-width=".8"/><path d="M2.6 1.8l1-1.6 1 1.6z" fill="#2f9e44"/><path d="M3.6 5L.6 6.8" stroke="#2f7fd0" stroke-width=".8"/><path d="M3.6 5l3.8 1.2" stroke="#d6336c" stroke-width=".8"/><path d="M6.6 5l1.4 1.4-2 .4z" fill="#d6336c"/></svg><svg style="left:592.00px;top:110.50px" width="4" height="3" viewBox="0 0 4 3" ><path d="M0 .4h4L2 2.8z" fill="#222"/></svg><svg style="left:602.00px;top:108.00px" width="8" height="8" viewBox="0 0 8 8" ><path d="M.8 0v7.2" stroke="#4cae5c" stroke-width=".8" fill="none"/><path d="M.4 7.2H8" stroke="#e0508a" stroke-width=".8"/></svg><div class="t" style="left:604.2px;top:108.8px;font-size:4.3px;line-height:4.6px;color:#8a8a8a;letter-spacing:-.2px">xy</div><svg style="left:613.40px;top:108.00px" width="8" height="8" viewBox="0 0 8 8" ><path d="M.8 0v7.2" stroke="#4cae5c" stroke-width=".8" fill="none"/><path d="M.4 7.2H8" stroke="#e0508a" stroke-width=".8"/></svg><div class="t" style="left:615.6px;top:108.8px;font-size:4.3px;line-height:4.6px;color:#8a8a8a;letter-spacing:-.2px">yz</div><svg style="left:625.00px;top:108.00px" width="8" height="8" viewBox="0 0 8 8" ><path d="M.8 0v7.2" stroke="#4cae5c" stroke-width=".8" fill="none"/><path d="M.4 7.2H8" stroke="#e0508a" stroke-width=".8"/></svg><div class="t" style="left:627.2px;top:108.8px;font-size:4.3px;line-height:4.6px;color:#8a8a8a;letter-spacing:-.2px">xz</div><svg style="left:636.40px;top:108.50px" width="8" height="7" viewBox="0 0 8 7" ><path d="M.4.4l3 1.4v3.4l-3 1.4zM7.6.4l-3 1.4v3.4l3 1.4z" fill="#2f7fd0"/><rect x="2.8" y="2.4" width="2.4" height="2.2" fill="#1b5fa8"/></svg><div class="a" style="left:648px;top:107.5px;width:1px;height:9px;background:#e2e2e2"></div><svg style="left:651.30px;top:108.30px" width="7.4" height="7.4" viewBox="0 0 7.4 7.4" ><path d="M6.2 2.2A3 3 0 106.8 4.8" fill="none" stroke="#2f7fd0" stroke-width=".9"/><path d="M7.2.2v2.8H4.4z" fill="#2f7fd0"/></svg><svg style="left:662.00px;top:110.50px" width="4" height="3" viewBox="0 0 4 3" ><path d="M0 .4h4L2 2.8z" fill="#222"/></svg><div class="a" style="left:671.3px;top:107.5px;width:1px;height:9px;background:#e2e2e2"></div><svg style="left:675.20px;top:108.00px" width="8.4" height="8" viewBox="0 0 8.4 8" ><circle cx="3.8" cy="4" r="3.4" fill="#d5d7db" stroke="#8d9097" stroke-width=".6"/><path d="M3.8.6c-2 2-2 4.8 0 6.8M.6 3h6.4M.6 5h6.4" stroke="#8d9097" stroke-width=".5" fill="none"/><rect x="4.4" y="3.4" width="3.6" height="4.2" fill="#b9bcc2" stroke="#7d8087" stroke-width=".5"/></svg><svg style="left:686.00px;top:110.50px" width="4" height="3" viewBox="0 0 4 3" ><path d="M0 .4h4L2 2.8z" fill="#222"/></svg><div class="a" style="left:695px;top:107.5px;width:1px;height:9px;background:#e2e2e2"></div><div class="a" style="left:698.8px;top:106.8px;width:19px;height:10.4px;background:#d0e6f9;border:1px solid #b4d6f4;border-radius:1px"></div><svg style="left:700.10px;top:109.00px" width="7" height="6" viewBox="0 0 7 6" ><path d="M6.6.2v5.6L2.6 4.4H.4V1.6h2.2z" fill="#2f7fd0"/></svg><div class="a" style="left:708.8px;top:107.8px;width:1px;height:8.4px;background:#b4d6f4"></div><svg style="left:711.40px;top:110.50px" width="4" height="3" viewBox="0 0 4 3" ><path d="M0 .4h4L2 2.8z" fill="#222"/></svg><svg style="left:720.40px;top:108.50px" width="8" height="7" viewBox="0 0 8 7" ><rect x="1.6" y=".3" width="6" height="4.6" fill="#9cc6ee" stroke="#2f7fd0" stroke-width=".6"/><rect x=".3" y="1.8" width="6" height="4.8" fill="#2f7fd0"/><rect x="1.4" y="3" width="3.8" height="2.4" fill="#cfe3f7"/></svg><svg style="left:731.20px;top:110.50px" width="4" height="3" viewBox="0 0 4 3" ><path d="M0 .4h4L2 2.8z" fill="#222"/></svg><div class="a" style="left:739.8px;top:106.8px;width:18.8px;height:10.4px;background:#d0e6f9;border:1px solid #b4d6f4;border-radius:1px"></div><svg style="left:741.40px;top:108.20px" width="8" height="7.6" viewBox="0 0 8 7.6" ><path d="M3.6 4.8V.6" stroke="#2f9e44" stroke-width=".8"/><path d="M3.6 4.8L.6 6.6" stroke="#2f7fd0" stroke-width=".8"/><path d="M3.6 4.8l3.8 1.2" stroke="#d6336c" stroke-width=".8"/><path d="M2.6 1.6l1-1.4 1 1.4z" fill="#2f9e44"/><path d="M6.6 4.8L8 6.2l-2 .4z" fill="#d6336c"/></svg><div class="a" style="left:749.8px;top:107.8px;width:1px;height:8.4px;background:#b4d6f4"></div><svg style="left:752.20px;top:110.50px" width="4" height="3" viewBox="0 0 4 3" ><path d="M0 .4h4L2 2.8z" fill="#222"/></svg><svg style="left:760.80px;top:108.30px" width="8" height="7.4" viewBox="0 0 8 7.4" ><rect x=".4" y=".4" width="7.2" height="6.6" fill="#c6dbf0" stroke="#8a95a5" stroke-width=".6"/><path d="M.4 2.6h7.2M.4 4.8h7.2M2.8.4v6.6M5.2.4v6.6" stroke="#8aa6c4" stroke-width=".5"/></svg><div class="a" style="left:772px;top:107.5px;width:1px;height:9px;background:#e2e2e2"></div><svg style="left:777.00px;top:108.00px" width="8" height="8" viewBox="0 0 8 8" ><circle cx="4.2" cy="3.2" r="2.9" fill="#c9c9cf" stroke="#85858c" stroke-width=".6"/><circle cx="4.2" cy="3.2" r="1.2" fill="#f3a33a"/><path d="M1.2 7.6c1-2.4 2-3 3.4-3" stroke="#d6336c" stroke-width="1" fill="none"/></svg><svg style="left:787.20px;top:110.50px" width="4" height="3" viewBox="0 0 4 3" ><path d="M0 .4h4L2 2.8z" fill="#222"/></svg><div class="a" style="left:796.4px;top:107.5px;width:1px;height:9px;background:#e2e2e2"></div><svg style="left:800.60px;top:108.00px" width="8" height="8" viewBox="0 0 8 8" ><circle cx="4" cy="4" r="2.7" fill="none" stroke="#2f7fd0" stroke-width="1.7"/><circle cx="4" cy="4" r="3.6" fill="none" stroke="#2f7fd0" stroke-width=".8" stroke-dasharray="1.4 1.4"/></svg><svg style="left:811.60px;top:110.50px" width="4" height="3" viewBox="0 0 4 3" ><path d="M0 .4h4L2 2.8z" fill="#222"/></svg><svg style="left:820.80px;top:108.80px" width="8.4" height="6.4" viewBox="0 0 8.4 6.4" ><path d="M.3 1.4h2L3 .3h2.4l.7 1.1h2v4.7H.3z" fill="#2f7fd0"/><circle cx="4.2" cy="3.6" r="1.5" fill="#e6f0fa"/></svg><svg style="left:832.40px;top:107.80px" width="8.4" height="8.4" viewBox="0 0 8.4 8.4" ><rect x="2" y=".4" width="4.4" height="2.4" fill="#fff" stroke="#2f7fd0" stroke-width=".7"/><rect x=".4" y="2.6" width="7.6" height="3.6" rx=".6" fill="#cfe3f7" stroke="#2f7fd0" stroke-width=".7"/><rect x="2" y="5" width="4.4" height="3" fill="#fff" stroke="#2f7fd0" stroke-width=".7"/></svg>
<svg style="left:945.80px;top:123.30px" width="6.4" height="5.4" viewBox="0 0 6.4 5.4" ><rect width="6.4" height="5.4" rx="1" fill="#27408b"/><rect x="1" y="1.2" width="2.8" height="2.6" fill="#f2d43a"/><rect x="3.8" y="1.2" width="1.8" height="2.6" fill="#5aa7e8"/></svg>
<div class="panel" style="left:519px;top:450.6px;width:437.5px;height:70.39999999999998px"></div>
<div class="t" style="left:525.2px;top:454.8px;font-size:6.8px;letter-spacing:-.15px;line-height:8.5px;color:#555">Messages</div>
<div class="t" style="left:578.6px;top:454.8px;font-size:6.8px;letter-spacing:-.15px;line-height:8.5px;color:#555">Progress</div>
<div class="t" style="left:617.6px;top:454.8px;font-size:6.8px;letter-spacing:-.15px;line-height:8.5px;color:#555">Log</div>
<div class="t" style="left:641.4px;top:454.8px;font-size:6.8px;letter-spacing:-.15px;line-height:8.5px;color:#345a9c">Calibrated Confidence Interval</div>
<svg style="left:559.10px;top:456.70px" width="5" height="5" viewBox="0 0 5 5" ><path d="M.5.5l4 4M4.500.5l-4 4" stroke="#aaa" stroke-width=".6"/></svg>
<svg style="left:732.90px;top:456.70px" width="5" height="5" viewBox="0 0 5 5" ><path d="M.5.5l4 4M4.500.5l-4 4" stroke="#aaa" stroke-width=".6"/></svg>
<div class="a" style="left:639.4px;top:465px;width:103px;height:1.200px;background:#2f7fd0;border-radius:1px"></div>
<svg style="left:929.80px;top:457.60px" width="5" height="3.4" viewBox="0 0 5 3.4" ><path d="M.5.5l2 2 2-2" fill="none" stroke="#b4b4b4" stroke-width=".7"/></svg><svg style="left:939.20px;top:456.80px" width="5" height="5" viewBox="0 0 5 5" ><rect x=".4" y=".4" width="4.2" height="4.2" fill="none" stroke="#a8a8a8" stroke-width=".6"/><path d="M.4 1h4.2" stroke="#a8a8a8" stroke-width=".9"/></svg><svg style="left:948.50px;top:456px" width="4" height="6" viewBox="0 0 4 6" ><path d="M1 .4h2v2.6l.6.8H.4l.6-.8zM2 3.8v2" fill="none" stroke="#b4b4b4" stroke-width=".6"/></svg>
<svg style="left:522.00px;top:469.40px" width="8" height="8" viewBox="0 0 8 8" ><path d="M2.6 1.2H8M2.6 4H8M2.6 6.8H8" stroke="#2f7fd0" stroke-width=".8"/><path d="M.2 1.2h1.4M.2 4h1.4M.2 6.8h1.4" stroke="#2f7fd0" stroke-width="1"/></svg><div class="a" style="left:533.2px;top:469px;width:1px;height:9px;background:#dcdcdc"></div><div class="t" style="left:535.6px;top:468.7px;font-size:4.7px;line-height:4.7px;color:#2f86d6;text-align:center;width:12px;letter-spacing:-.2px;-webkit-text-stroke:.2px #2f86d6">8.85<br>e-12</div><div class="a" style="left:548.1999999999999px;top:468.2px;width:10.4px;height:10.4px;background:#cde4f8;border-radius:1px"></div><div class="t" style="left:547.4px;top:468.7px;font-size:4.7px;line-height:4.7px;color:#2f86d6;text-align:center;width:12px;letter-spacing:-.2px;-webkit-text-stroke:.2px #2f86d6">&nbsp;<br></div><div class="t" style="left:549.3px;top:471.2px;font-size:3.6px;line-height:4.4px;color:#2f86d6;font-weight:bold;letter-spacing:-.1px">AUTO</div><div class="t" style="left:558.6px;top:468.7px;font-size:4.7px;line-height:4.7px;color:#2f86d6;text-align:center;width:12px;letter-spacing:-.2px;-webkit-text-stroke:.2px #2f86d6">8.5<br>e-1</div><div class="t" style="left:570px;top:468.7px;font-size:4.7px;line-height:4.7px;color:#2f86d6;text-align:center;width:12px;letter-spacing:-.2px;-webkit-text-stroke:.2px #2f86d6">850<br>e-3</div><div class="t" style="left:583.2px;top:470.4px;font-size:5px;line-height:6px;color:#2f86d6;letter-spacing:-.2px;-webkit-text-stroke:.2px #2f86d6">0.85</div><div class="a" style="left:595.4px;top:469px;width:1px;height:9px;background:#dcdcdc"></div><div class="a" style="left:598px;top:468.2px;width:10.6px;height:10.4px;background:#cde4f8;border-radius:1px"></div><svg style="left:599.20px;top:471.20px" width="8" height="4.4" viewBox="0 0 8 4.4" ><rect x=".3" y=".3" width="7.4" height="3.8" fill="#9cc6ee" stroke="#2f7fd0" stroke-width=".6"/><path d="M2.8.3v3.8M5.2.3v3.8" stroke="#2f7fd0" stroke-width=".6"/></svg><svg style="left:610.40px;top:469.40px" width="8" height="8" viewBox="0 0 8 8" ><circle cx="4" cy="4" r="3.5" fill="#9cc6ee" stroke="#2f7fd0" stroke-width=".7"/><circle cx="4" cy="4" r="1.4" fill="#fff" stroke="#2f7fd0" stroke-width=".6"/><path d="M4 .5v7M.5 4h7" stroke="#2f7fd0" stroke-width=".4"/></svg><div class="a" style="left:622px;top:469px;width:1px;height:9px;background:#dcdcdc"></div><svg style="left:626.60px;top:469.20px" width="6" height="8.4" viewBox="0 0 6 8.4" ><path d="M1.4.4l2.2 4" stroke="#c77a2a" stroke-width=".9"/><path d="M2.4 4.4l2.6-1 1 4.6H1.6z" fill="#f0a030"/></svg><svg style="left:638.20px;top:469.40px" width="6.4" height="8" viewBox="0 0 6.4 8" ><rect x=".6" y="1.6" width="5.2" height="6.2" rx=".8" fill="#2f7fd0"/><rect x="0" y=".6" width="6.4" height="1" fill="#2f7fd0"/><rect x="2.2" y="0" width="2" height="1" fill="#2f7fd0"/><rect x="1.8" y="3" width="2.8" height="3.4" fill="#9cc6ee"/></svg><div class="a" style="left:649.2px;top:469px;width:1px;height:9px;background:#dcdcdc"></div><svg style="left:653.60px;top:469.60px" width="8" height="7.6" viewBox="0 0 8 7.6" ><path d="M.8 0v2M7.2 0v2" stroke="#b9359c" stroke-width=".6"/><rect x=".4" y="1.6" width="7.2" height="5.6" fill="#f1d3ea" stroke="#b9359c" stroke-width=".6"/><rect x="3" y="3.4" width="3.2" height="2.6" fill="#b9359c"/></svg><svg style="left:665.20px;top:469.60px" width="7.6" height="7.6" viewBox="0 0 7.6 7.6" ><rect width="7.6" height="7.6" fill="#b9359c"/></svg><svg style="left:675.80px;top:469.40px" width="8.4" height="8" viewBox="0 0 8.4 8" ><path d="M4.2.4C1.8.4.3 2 .3 3.8S1.6 7.2 3.6 7.2c.9 0 1-.5 1-.9 0-.8.5-1 1.2-1 1.6 0 2.3-.9 2.3-2C8.100 1.700 6.400.4 4.200.4z" fill="#e7a5d8" stroke="#b9359c" stroke-width=".6"/><circle cx="2.4" cy="2.6" r=".8" fill="#b9359c"/><circle cx="4.6" cy="2" r=".8" fill="#b9359c"/><circle cx="6.4" cy="3.2" r=".7" fill="#b9359c"/></svg><svg style="left:688.00px;top:469.40px" width="8" height="8" viewBox="0 0 8 8" ><rect x=".4" y=".4" width="7.2" height="7.2" fill="#fbf1f8" stroke="#d9a9cf" stroke-width=".6"/><circle cx="4.2" cy="3.8" r="1.6" fill="none" stroke="#d9a9cf" stroke-width=".6"/></svg><svg style="left:699.40px;top:469.40px" width="8" height="8" viewBox="0 0 8 8" ><path d="M.4.8h4.2M.4 3h6M.4 5.200h4.200" stroke="#b9359c" stroke-width="1.1"/><path d="M4 7.2h3.800M5.600 3.800v2.600" stroke="#b9359c" stroke-width=".7"/><rect x="5.200" y=".2" width="2.400" height="1.600" fill="#b9359c"/></svg><div class="a" style="left:711.2px;top:469px;width:1px;height:9px;background:#dcdcdc"></div><svg style="left:713.90px;top:469.40px" width="8.6" height="8" viewBox="0 0 8.6 8" ><rect x=".3" y=".3" width="5.400" height="5" fill="#d6d6da" stroke="#85858c" stroke-width=".5"/><rect x="2.800" y="2.800" width="5.400" height="4.800" fill="#9cc6ee" stroke="#2f7fd0" stroke-width=".6"/><rect x="3.800" y="4.200" width="3.200" height="2.200" fill="#2f7fd0"/></svg><svg style="left:737.30px;top:469.40px" width="8.6" height="8" viewBox="0 0 8.6 8" ><rect x=".3" y=".3" width="5.400" height="5" fill="#d6d6da" stroke="#85858c" stroke-width=".5"/><rect x="2.800" y="2.800" width="5.400" height="4.800" fill="#9cc6ee" stroke="#2f7fd0" stroke-width=".6"/><rect x="3.800" y="4.200" width="3.200" height="2.200" fill="#2f7fd0"/></svg><svg style="left:725.70px;top:469.90px" width="8.6" height="7" viewBox="0 0 8.6 7" ><rect x=".3" y=".3" width="6.600" height="6.200" fill="#fff" stroke="#85858c" stroke-width=".5"/><path d="M.3 1.600h6.600" stroke="#85858c" stroke-width=".8"/><path d="M3.400 4h4.600M6.600 2.600L8.200 4 6.600 5.400" stroke="#2f7fd0" stroke-width=".8" fill="none"/></svg><div class="a" style="left:749.600px;top:469px;width:1px;height:9px;background:#dcdcdc"></div><svg style="left:753.70px;top:469.40px" width="7" height="8" viewBox="0 0 7 8" ><rect x=".3" y=".3" width="6.400" height="7.400" fill="#f4f4f6" stroke="#85858c" stroke-width=".5"/><rect x="1.200" y="1.400" width="4.600" height="2.400" fill="#9cc6ee" stroke="#2f7fd0" stroke-width=".4"/><path d="M1.200 5.200h4.600M1.200 6.400h4.600" stroke="#85858c" stroke-width=".5"/></svg><svg style="left:765.10px;top:469.70px" width="7" height="7.4" viewBox="0 0 7 7.4" ><rect x=".4" y=".4" width="6.200" height="6.600" fill="#f8e4f3" stroke="#b9359c" stroke-width=".6"/><path d="M2.500.4v6.600M4.600.4v6.600" stroke="#b9359c" stroke-width=".6"/></svg><svg style="left:775.40px;top:471.90px" width="4" height="3" viewBox="0 0 4 3" ><path d="M0 .4h4L2 2.8z" fill="#222"/></svg>
<div class="a" style="left:520.8px;top:480px;width:433.20000000000005px;height:39.799999999999955px;background:#fff;border:1px solid #d9d9d9"></div>
<div class="a" style="left:520.8px;top:480px;width:433.20000000000005px;height:14px;background:#f0f0f0"></div>
<div class="a" style="left:520.8px;top:480px;width:73.90000000000009px;height:39.799999999999955px;background:#f0f0f0"></div>
<div class="a" style="left:594.2px;top:480px;width:1.2px;height:39.799999999999955px;background:#dadada"></div>
<div class="a" style="left:621.1px;top:480px;width:1.2px;height:39.799999999999955px;background:#dadada"></div>
<div class="a" style="left:648.1px;top:480px;width:1.2px;height:39.799999999999955px;background:#dadada"></div>
<div class="a" style="left:666.1px;top:480px;width:1.2px;height:39.799999999999955px;background:#dadada"></div>
<div class="a" style="left:683.7px;top:480px;width:1.2px;height:39.799999999999955px;background:#dadada"></div>
<div class="a" style="left:715.5px;top:480px;width:1.2px;height:39.799999999999955px;background:#dadada"></div>
<div class="a" style="left:749.0px;top:480px;width:1.2px;height:39.799999999999955px;background:#dadada"></div>
<div class="a" style="left:783.0px;top:480px;width:1.2px;height:39.799999999999955px;background:#dadada"></div>
<div class="a" style="left:817.0px;top:480px;width:1.2px;height:39.799999999999955px;background:#dadada"></div>
<div class="a" style="left:851.0px;top:480px;width:1.2px;height:39.799999999999955px;background:#dadada"></div>
<div class="a" style="left:885.2px;top:480px;width:1.2px;height:39.799999999999955px;background:#dadada"></div>
<div class="a" style="left:919.2px;top:480px;width:1.2px;height:39.799999999999955px;background:#dadada"></div>
<div class="a" style="left:520.8px;top:493.3px;width:433.20000000000005px;height:1.3px;background:#dadada"></div>
<div class="a" style="left:520.8px;top:501.7px;width:433.20000000000005px;height:1.3px;background:#dadada"></div>
<div class="a" style="left:520.8px;top:510.4px;width:433.20000000000005px;height:1.3px;background:#dadada"></div>
<div class="t" style="left:597.5px;top:483.99px;font-size:6.5px;letter-spacing:-0.19px;">Mean</div>
<div class="t" style="left:624.7px;top:483.99px;font-size:6.5px;letter-spacing:-1.067px;">STD</div>
<div class="t" style="left:651.4px;top:483.99px;font-size:6.5px;letter-spacing:-0.383px;">Rhat</div>
<div class="t" style="left:669.2px;top:483.99px;font-size:6.5px;letter-spacing:-0.076px;">Neff</div>
<div class="t" style="left:687.3px;top:483.99px;font-size:6.5px;letter-spacing:0.005px;">Minimum</div>
<div class="t" style="left:719.4px;top:483.99px;font-size:6.5px;letter-spacing:-0.081px;">Maximum</div>
<div class="t" style="left:751.9px;top:483.99px;font-size:6.5px;letter-spacing:-0.413px;">Lower 90%</div>
<div class="t" style="left:786.1px;top:483.99px;font-size:6.5px;letter-spacing:-0.391px;">Upper 90%</div>
<div class="t" style="left:820px;top:483.99px;font-size:6.5px;letter-spacing:-0.38px;">Lower 95%</div>
<div class="t" style="left:854px;top:483.99px;font-size:6.5px;letter-spacing:-0.38px;">Upper 95%</div>
<div class="t" style="left:888px;top:483.99px;font-size:6.5px;letter-spacing:-0.38px;">Lower 99%</div>
<div class="t" style="left:921.8px;top:483.99px;font-size:6.5px;letter-spacing:-0.413px;">Upper 99%</div>
<div class="t" style="left:521.8px;top:494.69px;font-size:6.5px;letter-spacing:-0.22px;">E0</div>
<div class="t" style="left:596.1px;top:494.05px;font-size:6.4px;transform:scaleX(0.8);transform-origin:0 50%;">1.9959E11</div>
<div class="t" style="left:623.0px;top:494.05px;font-size:6.4px;transform:scaleX(0.8);transform-origin:0 50%;">5.5036E8</div>
<div class="t" style="left:650.0px;top:494.05px;font-size:6.4px;transform:scaleX(0.8);transform-origin:0 50%;">1.0250</div>
<div class="t" style="left:668.0px;top:494.05px;font-size:6.4px;transform:scaleX(0.8);transform-origin:0 50%;">549.07</div>
<div class="t" style="left:685.6px;top:494.05px;font-size:6.4px;transform:scaleX(0.8);transform-origin:0 50%;">1.9788E11</div>
<div class="t" style="left:717.4px;top:494.05px;font-size:6.4px;transform:scaleX(0.8);transform-origin:0 50%;">2.0141E11</div>
<div class="t" style="left:750.9px;top:494.05px;font-size:6.4px;transform:scaleX(0.8);transform-origin:0 50%;">1.9867E11</div>
<div class="t" style="left:784.9px;top:494.05px;font-size:6.4px;transform:scaleX(0.8);transform-origin:0 50%;">2.0040E11</div>
<div class="t" style="left:818.9px;top:494.05px;font-size:6.4px;transform:scaleX(0.8);transform-origin:0 50%;">1.9844E11</div>
<div class="t" style="left:852.9px;top:494.05px;font-size:6.4px;transform:scaleX(0.8);transform-origin:0 50%;">2.0053E11</div>
<div class="t" style="left:887.1px;top:494.05px;font-size:6.4px;transform:scaleX(0.8);transform-origin:0 50%;">1.9788E11</div>
<div class="t" style="left:921.1px;top:494.05px;font-size:6.4px;transform:scaleX(0.8);transform-origin:0 50%;">2.0075E11</div>
<div class="t" style="left:521.8px;top:503.49px;font-size:6.5px;letter-spacing:-0.22px;">nu0</div>
<div class="t" style="left:596.1px;top:502.85px;font-size:6.4px;transform:scaleX(0.8);transform-origin:0 50%;">0.30015</div>
<div class="t" style="left:623.0px;top:502.85px;font-size:6.4px;transform:scaleX(0.8);transform-origin:0 50%;">6.5087E-4</div>
<div class="t" style="left:650.0px;top:502.85px;font-size:6.4px;transform:scaleX(0.8);transform-origin:0 50%;">1.0092</div>
<div class="t" style="left:668.0px;top:502.85px;font-size:6.4px;transform:scaleX(0.8);transform-origin:0 50%;">561.43</div>
<div class="t" style="left:685.6px;top:502.85px;font-size:6.4px;transform:scaleX(0.8);transform-origin:0 50%;">0.29757</div>
<div class="t" style="left:717.4px;top:502.85px;font-size:6.4px;transform:scaleX(0.8);transform-origin:0 50%;">0.30288</div>
<div class="t" style="left:750.9px;top:502.85px;font-size:6.4px;transform:scaleX(0.8);transform-origin:0 50%;">0.29890</div>
<div class="t" style="left:784.9px;top:502.85px;font-size:6.4px;transform:scaleX(0.8);transform-origin:0 50%;">0.30113</div>
<div class="t" style="left:818.9px;top:502.85px;font-size:6.4px;transform:scaleX(0.8);transform-origin:0 50%;">0.29875</div>
<div class="t" style="left:852.9px;top:502.85px;font-size:6.4px;transform:scaleX(0.8);transform-origin:0 50%;">0.30139</div>
<div class="t" style="left:887.1px;top:502.85px;font-size:6.4px;transform:scaleX(0.8);transform-origin:0 50%;">0.29811</div>
<div class="t" style="left:921.1px;top:502.85px;font-size:6.4px;transform:scaleX(0.8);transform-origin:0 50%;">0.30175</div>
<div class="t" style="left:521.8px;top:512.19px;font-size:6.5px;letter-spacing:-0.22px;">Measurement uncertainty</div>
<div class="t" style="left:596.1px;top:511.55px;font-size:6.4px;transform:scaleX(0.8);transform-origin:0 50%;">1.3180E-6</div>
<div class="t" style="left:623.0px;top:511.55px;font-size:6.4px;transform:scaleX(0.8);transform-origin:0 50%;">1.0706E-7</div>
<div class="t" style="left:650.0px;top:511.55px;font-size:6.4px;transform:scaleX(0.8);transform-origin:0 50%;">1.0214</div>
<div class="t" style="left:668.0px;top:511.55px;font-size:6.4px;transform:scaleX(0.8);transform-origin:0 50%;">545.24</div>
<div class="t" style="left:685.6px;top:511.55px;font-size:6.4px;transform:scaleX(0.8);transform-origin:0 50%;">1.0245E-6</div>
<div class="t" style="left:717.4px;top:511.55px;font-size:6.4px;transform:scaleX(0.8);transform-origin:0 50%;">1.7906E-6</div>
<div class="t" style="left:750.9px;top:511.55px;font-size:6.4px;transform:scaleX(0.8);transform-origin:0 50%;">1.1281E-6</div>
<div class="t" style="left:784.9px;top:511.55px;font-size:6.4px;transform:scaleX(0.8);transform-origin:0 50%;">1.4810E-6</div>
<div class="t" style="left:818.9px;top:511.55px;font-size:6.4px;transform:scaleX(0.8);transform-origin:0 50%;">1.1201E-6</div>
<div class="t" style="left:852.9px;top:511.55px;font-size:6.4px;transform:scaleX(0.8);transform-origin:0 50%;">1.5270E-6</div>
<div class="t" style="left:887.1px;top:511.55px;font-size:6.4px;transform:scaleX(0.8);transform-origin:0 50%;">1.0742E-6</div>
<div class="t" style="left:921.1px;top:511.55px;font-size:6.4px;transform:scaleX(0.8);transform-origin:0 50%;">1.6197E-6</div>
<div class="t" style="left:620.8px;top:528.46px;font-size:6.7px;transform:scaleX(0.794);transform-origin:0 50%;color:#222">2.74 GB | 2.96 GB</div>
</div></body></html>
